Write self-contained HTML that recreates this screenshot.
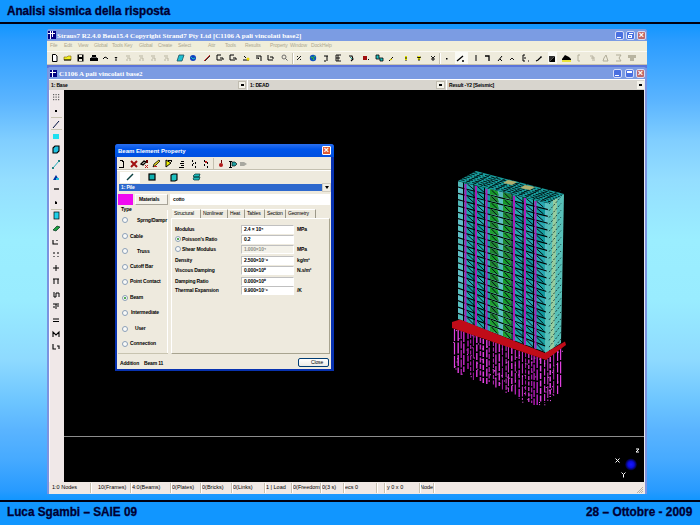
<!DOCTYPE html><html><head><meta charset="utf-8"><style>
*{margin:0;padding:0;box-sizing:border-box}
html,body{width:700px;height:525px;overflow:hidden}
body{position:relative;font-family:"Liberation Sans",sans-serif;
background:linear-gradient(to bottom,#1196ff 0px,#1196ff 24px,#2a9cff 40px,#32a0ff 50px,#5ab4ff 100px,#80ceff 140px,#94deff 180px,#9beeff 240px,#99ecff 300px,#8edaff 360px,#6ec6ff 400px,#5ab4ff 430px,#46aaff 460px,#289bff 490px,#1196ff 500px,#1196ff 525px);}
.a{position:absolute}
.ttl{left:7px;top:3px;font-size:13px;font-weight:bold;color:#000033;-webkit-text-stroke:0.35px #000033;transform-origin:0 0;white-space:nowrap}
.hline{left:0;width:700px;height:2px;background:#000010}
.foot{font-size:12.5px;font-weight:bold;color:#000033;-webkit-text-stroke:0.3px #000033;top:505px;white-space:nowrap;transform-origin:0 0}
.ttxt{color:#fff;font-weight:bold;font-size:7px;white-space:nowrap;line-height:8px;font-family:"Liberation Serif",serif}
.sm{font-size:5px;color:#000;white-space:nowrap;line-height:7px;font-weight:bold;letter-spacing:-0.15px}
.btn{width:9px;height:9px;border:1px solid #d4dcf8;border-radius:2px}
svg{position:absolute;left:0;top:0}
</style></head><body>
<div class="a ttl" style="transform:scaleX(0.9)">Analisi sismica della risposta</div>
<div class="a hline" style="top:22px"></div>
<div class="a hline" style="top:500px"></div>
<div class="a foot" style="left:7px;transform:scaleX(0.94)">Luca Sgambi – SAIE 09</div>
<div class="a foot" style="left:586px;transform:scaleX(0.95)">28 – Ottobre - 2009</div>
<div class="a" style="left:47px;top:29px;width:600px;height:465px;background:#7b93e0;border-radius:3px 3px 0 0"></div>
<div class="a" style="left:47px;top:29px;width:600px;height:12px;background:#7b9ce3;border-radius:3px 3px 0 0"></div>
<svg style="left:48px;top:31px" width="8" height="8" viewBox="0 0 8 8" shape-rendering="crispEdges"><rect width="8" height="8" fill="#000080"/><rect x="2" y="0" width="1" height="8" fill="#fff"/><rect x="4" y="0" width="1" height="6" fill="#fff"/><rect x="0" y="2" width="7" height="1" fill="#fff"/></svg>
<div class="a ttxt" style="left:57px;top:32px">Straus7 R2.4.0 Beta15.4 Copyright Strand7 Pty Ltd [C1106 A pali vincolati base2]</div>
<div class="a btn" style="left:615px;top:31px;background:#4a70e0"></div>
<div class="a btn" style="left:626px;top:31px;background:#4a70e0"></div>
<div class="a btn" style="left:637px;top:31px;background:#c06868"></div>
<div class="a" style="left:617px;top:37px;width:4px;height:1px;background:#fff"></div>
<div class="a" style="left:629px;top:33px;width:4px;height:1px;background:#fff"></div><div class="a" style="left:628px;top:35px;width:4px;height:3px;border:1px solid #fff;border-top-width:1px"></div>
<div class="a" style="left:637px;top:30px;width:9px;height:9px;color:#fff;font-size:9px;line-height:10px;text-align:center;font-weight:bold">×</div>
<div class="a" style="left:47px;top:41px;width:600px;height:10px;background:#f0eeda"></div>
<div class="a sm" style="left:50px;top:42px;color:#aca890;font-weight:normal">File</div>
<div class="a sm" style="left:64px;top:42px;color:#aca890;font-weight:normal">Edit</div>
<div class="a sm" style="left:78px;top:42px;color:#aca890;font-weight:normal">View</div>
<div class="a sm" style="left:94px;top:42px;color:#aca890;font-weight:normal">Global</div>
<div class="a sm" style="left:112px;top:42px;color:#aca890;font-weight:normal">Tools Key</div>
<div class="a sm" style="left:139px;top:42px;color:#aca890;font-weight:normal">Global</div>
<div class="a sm" style="left:158px;top:42px;color:#aca890;font-weight:normal">Create</div>
<div class="a sm" style="left:178px;top:42px;color:#aca890;font-weight:normal">Select</div>
<div class="a sm" style="left:208px;top:42px;color:#aca890;font-weight:normal">Attr</div>
<div class="a sm" style="left:225px;top:42px;color:#aca890;font-weight:normal">Tools</div>
<div class="a sm" style="left:245px;top:42px;color:#aca890;font-weight:normal">Results</div>
<div class="a sm" style="left:270px;top:42px;color:#aca890;font-weight:normal">Property</div>
<div class="a sm" style="left:290px;top:42px;color:#aca890;font-weight:normal">Window</div>
<div class="a sm" style="left:311px;top:42px;color:#aca890;font-weight:normal">Dock</div>
<div class="a sm" style="left:322px;top:42px;color:#aca890;font-weight:normal">Help</div>
<div class="a" style="left:47px;top:51px;width:600px;height:1px;background:#fbfaf4"></div>
<div class="a" style="left:47px;top:52px;width:600px;height:12px;background:#eeebdc"></div>
<div class="a" style="left:47px;top:64px;width:600px;height:1px;background:#c8c4b0"></div>
<div class="a" style="left:47px;top:65px;width:600px;height:3px;background:#5b74d8"></div>
<div class="a" style="left:48px;top:67px;width:598px;height:12px;background:#7b9be2;border-radius:2px 2px 0 0"></div>
<svg style="left:50px;top:70px" width="7" height="7" viewBox="0 0 8 8" shape-rendering="crispEdges"><rect width="8" height="8" fill="#000080"/><rect x="2" y="0" width="1" height="8" fill="#fff"/><rect x="4" y="0" width="1" height="6" fill="#fff"/><rect x="0" y="2" width="7" height="1" fill="#fff"/></svg>
<div class="a ttxt" style="left:59px;top:70px">C1106 A pali vincolati base2</div>
<div class="a btn" style="left:613px;top:69px;background:#4a70e0"></div>
<div class="a btn" style="left:625px;top:69px;background:#4a70e0"></div>
<div class="a btn" style="left:636px;top:69px;background:#c06868"></div>
<div class="a" style="left:615px;top:75px;width:4px;height:1px;background:#fff"></div>
<div class="a" style="left:627px;top:71px;width:5px;height:2px;background:#fff"></div>
<div class="a" style="left:636px;top:68px;width:9px;height:9px;color:#fff;font-size:9px;line-height:10px;text-align:center;font-weight:bold">×</div>
<div class="a" style="left:49px;top:79px;width:596px;height:1px;background:#fff"></div>
<div class="a" style="left:49px;top:80px;width:596px;height:10px;background:#d8d5ce"></div>
<div class="a sm" style="left:51px;top:82px;font-weight:bold">1: Base</div>
<div class="a" style="left:238px;top:81px;width:8px;height:8px;background:#f4f2ea;border:1px solid #c0bcb0"></div>
<div class="a" style="left:241px;top:84px;width:3px;height:2px;background:#000"></div>
<div class="a" style="left:247px;top:80px;width:1px;height:10px;background:#fff"></div>
<div class="a sm" style="left:250px;top:82px;font-weight:bold">1: DEAD</div>
<div class="a" style="left:436px;top:81px;width:9px;height:8px;background:#f4f2ea;border:1px solid #c0bcb0"></div>
<div class="a" style="left:439px;top:84px;width:3px;height:2px;background:#000"></div>
<div class="a" style="left:446px;top:80px;width:1px;height:10px;background:#fff"></div>
<div class="a sm" style="left:449px;top:82px;font-weight:bold">Result -Y2 [Seismic]</div>
<div class="a" style="left:637px;top:81px;width:7px;height:8px;background:#f4f2ea"></div>
<div class="a" style="left:639px;top:84px;width:3px;height:2px;background:#000"></div>
<div class="a" style="left:49px;top:90px;width:15px;height:392px;background:#f0e8e8"></div>
<div class="a" style="left:49px;top:90px;width:1px;height:392px;background:#fafaff"></div>
<div class="a" style="left:64px;top:90px;width:580px;height:392px;background:#000"></div>
<div class="a" style="left:64px;top:436px;width:580px;height:1px;background:#8c8c8c"></div>
<div class="a" style="left:644px;top:80px;width:1px;height:414px;background:#e8e8f0"></div>
<div class="a" style="left:49px;top:482px;width:596px;height:12px;background:#f0e8e4"></div>
<svg width="700" height="525" viewBox="0 0 700 525" style="left:0;top:0"><path d="M52.5 54.5h3l1.5 1.5v5.5h-4.5z" fill="#fff" stroke="#000" stroke-width="1"/><path d="M64 57h3l1-1h3v4h-7z" fill="#f0f020" stroke="#806000" stroke-width="0.6"/><path d="M64 60h7" stroke="#000" stroke-width="1"/><rect x="77.5" y="54.5" width="6" height="7" fill="#000"/><rect x="79" y="55" width="3" height="2" fill="#eeebdc"/><rect x="79" y="59" width="3" height="2" fill="#eeebdc"/><path d="M90 58h8v3h-8z" fill="#000"/><path d="M92 55h4v3h-4z" fill="#000"/><rect x="91" y="57" width="6" height="1" fill="#666"/><path d="M103 59l2-2 2 1 1 1" fill="none" stroke="#000" stroke-width="1"/><path d="M114.5 57h3l-1.5 2z" fill="#000"/><path d="M116 59v2" stroke="#000"/><path d="M126 56h4M127 58h3v3M126 60h2" stroke="#b8b4a0" stroke-width="1" fill="none"/><path d="M139 56h4M140 58h3v3M139 60h2" stroke="#b8b4a0" stroke-width="1" fill="none"/><path d="M151 56h4M152 58h3v3M151 60h2" stroke="#b8b4a0" stroke-width="1" fill="none"/><path d="M164 56h4M165 58h3v3M164 60h2" stroke="#b8b4a0" stroke-width="1" fill="none"/><path d="M177 61l2-6h5l-2 6z" fill="#20c0d0" stroke="#205060" stroke-width="0.8"/><circle cx="193" cy="58" r="3" fill="#1040c0"/><path d="M191 57l2 2 2-1" stroke="#20c0c0" stroke-width="1" fill="none"/><path d="M204 61l6-6" stroke="#c02020" stroke-width="1"/><path d="M205 61l5-5" stroke="#000" stroke-width="0.8"/><path d="M217 55h4M217 55v5h5M220 58h3v2" stroke="#000" stroke-width="1" fill="none"/><path d="M230 55h4M230 55v5h5M233 58h3v2" stroke="#000" stroke-width="1" fill="none"/><path d="M243 60h6M244 56l2 2" stroke="#000" stroke-width="1" fill="none"/><circle cx="248" cy="59" r="1.5" fill="#e8d800"/><path d="M256 56h5v5M256 58h3l-1 1" stroke="#000" stroke-width="1" fill="none"/><path d="M268 55v5h5M270 57h3v2" stroke="#000" stroke-width="1" fill="none"/><circle cx="284" cy="57" r="2" fill="none" stroke="#606060" stroke-width="0.9"/><path d="M285.5 58.5l2 2" stroke="#606060"/><path d="M292.5 53v11" stroke="#c4c0b0"/><path d="M293.5 53v11" stroke="#fff"/><path d="M297 56l1 1M300 59l1 1M297 60l4-4" stroke="#000" stroke-width="0.9"/><circle cx="313" cy="58" r="3.2" fill="#1050c0"/><path d="M311 57l2 1 1 2M314 56l1 1" stroke="#30c040" stroke-width="1.2"/><path d="M324 56h4M327 56v5M324 61h2" stroke="#000" stroke-width="1"/><path d="M336 55h5M336 55v6h5M336 58h4M338 55v6" stroke="#000" stroke-width="0.9" fill="none"/><path d="M349 56l3 0 1 3-2 2" stroke="#000" stroke-width="1.1" fill="none"/><path d="M350 57l2 2" stroke="#20a0a0"/><rect x="363" y="56" width="4" height="4" fill="#a01010"/><rect x="368" y="59" width="1" height="1" fill="#000"/><path d="M376 55h3v3h4v3h-3v-2h-4z" fill="#20c0c0" stroke="#000" stroke-width="0.8"/><path d="M389 61l4-4" stroke="#000" stroke-width="1"/><path d="M390 60l2-1" stroke="#e0d000" stroke-width="1.3"/><path d="M406 56v4" stroke="#e0e000" stroke-width="2"/><path d="M405 58h2M406 60v1" stroke="#000" stroke-width="0.9"/><path d="M419 56v4" stroke="#f0f000" stroke-width="2.5"/><path d="M417 57l2 1 2-1M419 59v2" stroke="#000" stroke-width="0.9"/><path d="M431 56l2 2 2-2M433 58v3M431 59h4" stroke="#000" stroke-width="0.9" fill="none"/><path d="M439.5 53v11" stroke="#c4c0b0"/><path d="M440.5 53v11" stroke="#fff"/><rect x="446" y="58" width="1.5" height="1.5" fill="#000"/><rect x="455" y="52" width="13" height="12" fill="#fafaf4"/><path d="M457 61l6-5M462 61h2" stroke="#000" stroke-width="1.3"/><path d="M476 55v6" stroke="#000" stroke-width="1"/><path d="M485 56h4v5" stroke="#000" stroke-width="1.3" fill="none"/><path d="M498 61l4-5M500 59l2 2" stroke="#000" stroke-width="1"/><path d="M510 60l2-2 2 2" stroke="#000" stroke-width="0.9" fill="none"/><path d="M525 55h-2v6h2M524 58h2M528 61h1" stroke="#000" stroke-width="1" fill="none"/><path d="M536 61l2-1 2-2 1-1M540 57h2" stroke="#000" stroke-width="1.1" fill="none"/><rect x="548" y="52" width="9" height="12" fill="#fafaf4"/><path d="M549 62h6v-6z" fill="#000"/><path d="M549 62v-6h6z" fill="#303030"/><path d="M562 59l3-4 4 2 2 2v1h-9z" fill="#000"/><path d="M562 61h9" stroke="#e8e000" stroke-width="1.5"/><path d="M578 55h2M578 55v6h2" stroke="#b0ac98" stroke-width="1" fill="none"/><path d="M590 56h3v5M591 58h4M594 60h1" stroke="#b0ac98" stroke-width="0.9" fill="none"/><path d="M603 61h5l-1-3-1-3-2 3z" fill="none" stroke="#b0ac98" stroke-width="1"/><path d="M616 55h5l-2 3 2 3h-5" stroke="#b0ac98" stroke-width="1" fill="none"/><path d="M628 55h8v3h-2v3h-4v-3h-2z" fill="#b8b4a0"/></svg>
<svg width="700" height="525" viewBox="0 0 700 525" style="left:0;top:0"><rect x="53" y="94" width="1.2" height="1.2" fill="#606060"/><rect x="55.5" y="94" width="1.2" height="1.2" fill="#606060"/><rect x="58" y="94" width="1.2" height="1.2" fill="#606060"/><rect x="53" y="96.5" width="1.2" height="1.2" fill="#606060"/><rect x="55.5" y="96.5" width="1.2" height="1.2" fill="#606060"/><rect x="58" y="96.5" width="1.2" height="1.2" fill="#606060"/><rect x="53" y="99" width="1.2" height="1.2" fill="#606060"/><rect x="55.5" y="99" width="1.2" height="1.2" fill="#606060"/><rect x="58" y="99" width="1.2" height="1.2" fill="#606060"/><rect x="55" y="110" width="2" height="2" fill="#000"/><path d="M51 117.5h11" stroke="#c8c4b0"/><path d="M51 129.5h11" stroke="#c8c4b0"/><path d="M51 209.5h11" stroke="#c8c4b0"/><path d="M53 128l6-7" stroke="#001040" stroke-width="1"/><rect x="53" y="134" width="6" height="5" fill="#20e0f0"/><path d="M53 148l2-2h4v5l-2 2h-4z" fill="#20c0e0" stroke="#000" stroke-width="1.1"/><path d="M53 168l6-7" stroke="#20b0c0" stroke-width="1"/><rect x="52" y="167" width="2" height="2" fill="#208080"/><rect x="58" y="160" width="2" height="2" fill="#208080"/><path d="M53 180l3-5 3 5z" fill="#0030a0"/><rect x="56" y="178" width="3" height="2" fill="#20c0e0"/><path d="M54 189h5" stroke="#000" stroke-width="1.3"/><path d="M55 201l2 1v2h-2z" fill="#000"/><rect x="54" y="212" width="5" height="7" fill="#20d0e8" stroke="#000" stroke-width="0.7"/><path d="M53 230l4-4 3 1-4 4z" fill="#20a040" stroke="#003020" stroke-width="0.7"/><path d="M53 240v4h5M57 240v1" stroke="#000" stroke-width="1.1" fill="none"/><path d="M54 252v2M54 256v1M58 252v2M58 256v1" stroke="#000" stroke-width="1"/><path d="M53 268h6M56 265v6" stroke="#000" stroke-width="1"/><path d="M53 279h6M54 279v5M58 279v5" stroke="#000" stroke-width="1" fill="none"/><path d="M54 292v5h2v-4h3v4" stroke="#000" stroke-width="1" fill="none"/><path d="M53 304h6M56 304v5M53 307h2M57 306h2" stroke="#000" stroke-width="1" fill="none"/><path d="M53 319h6M53 321.5h6" stroke="#000" stroke-width="1"/><path d="M53 337v-5l3 3 3-3v5" stroke="#000" stroke-width="1.1" fill="none"/><path d="M53 344v5h3M57 346h2v3" stroke="#000" stroke-width="1.1" fill="none"/></svg>
<div class="a sm" style="left:52px;top:484px;font-size:5.5px;letter-spacing:0;font-weight:normal">1:0 Nodes</div>
<div class="a sm" style="left:98px;top:484px;font-size:5.5px;letter-spacing:0;font-weight:normal">10(Frames)</div>
<div class="a sm" style="left:132px;top:484px;font-size:5.5px;letter-spacing:0;font-weight:normal">4:0(Beams)</div>
<div class="a sm" style="left:172px;top:484px;font-size:5.5px;letter-spacing:0;font-weight:normal">0(Plates)</div>
<div class="a sm" style="left:202px;top:484px;font-size:5.5px;letter-spacing:0;font-weight:normal">0(Bricks)</div>
<div class="a sm" style="left:233px;top:484px;font-size:5.5px;letter-spacing:0;font-weight:normal">0(Links)</div>
<div class="a sm" style="left:266px;top:484px;font-size:5.5px;letter-spacing:0;font-weight:normal">1 | Load</div>
<div class="a sm" style="left:293px;top:484px;font-size:5.5px;letter-spacing:0;font-weight:normal">0(Freedom)</div>
<div class="a sm" style="left:322px;top:484px;font-size:5.5px;letter-spacing:0;font-weight:normal">0(3 s)</div>
<div class="a sm" style="left:345px;top:484px;font-size:5.5px;letter-spacing:0;font-weight:normal">ecs 0</div>
<div class="a sm" style="left:378px;top:484px;font-size:5.5px;letter-spacing:0;font-weight:normal"></div>
<div class="a sm" style="left:387px;top:484px;font-size:5.5px;letter-spacing:0;font-weight:normal">y 0 x 0</div>
<div class="a sm" style="left:420px;top:484px;font-size:5.5px;letter-spacing:0;font-weight:normal">Node</div>
<div class="a" style="left:90px;top:483px;width:1px;height:10px;background:#c8c0b0"></div><div class="a" style="left:91px;top:483px;width:1px;height:10px;background:#fff"></div>
<div class="a" style="left:130px;top:483px;width:1px;height:10px;background:#c8c0b0"></div><div class="a" style="left:131px;top:483px;width:1px;height:10px;background:#fff"></div>
<div class="a" style="left:170px;top:483px;width:1px;height:10px;background:#c8c0b0"></div><div class="a" style="left:171px;top:483px;width:1px;height:10px;background:#fff"></div>
<div class="a" style="left:200px;top:483px;width:1px;height:10px;background:#c8c0b0"></div><div class="a" style="left:201px;top:483px;width:1px;height:10px;background:#fff"></div>
<div class="a" style="left:231px;top:483px;width:1px;height:10px;background:#c8c0b0"></div><div class="a" style="left:232px;top:483px;width:1px;height:10px;background:#fff"></div>
<div class="a" style="left:264px;top:483px;width:1px;height:10px;background:#c8c0b0"></div><div class="a" style="left:265px;top:483px;width:1px;height:10px;background:#fff"></div>
<div class="a" style="left:291px;top:483px;width:1px;height:10px;background:#c8c0b0"></div><div class="a" style="left:292px;top:483px;width:1px;height:10px;background:#fff"></div>
<div class="a" style="left:320px;top:483px;width:1px;height:10px;background:#c8c0b0"></div><div class="a" style="left:321px;top:483px;width:1px;height:10px;background:#fff"></div>
<div class="a" style="left:343px;top:483px;width:1px;height:10px;background:#c8c0b0"></div><div class="a" style="left:344px;top:483px;width:1px;height:10px;background:#fff"></div>
<div class="a" style="left:376px;top:483px;width:1px;height:10px;background:#c8c0b0"></div><div class="a" style="left:377px;top:483px;width:1px;height:10px;background:#fff"></div>
<div class="a" style="left:384px;top:483px;width:1px;height:10px;background:#c8c0b0"></div><div class="a" style="left:385px;top:483px;width:1px;height:10px;background:#fff"></div>
<div class="a" style="left:419px;top:483px;width:1px;height:10px;background:#c8c0b0"></div><div class="a" style="left:420px;top:483px;width:1px;height:10px;background:#fff"></div>
<div class="a" style="left:433px;top:483px;width:1px;height:10px;background:#c8c0b0"></div><div class="a" style="left:434px;top:483px;width:1px;height:10px;background:#fff"></div>
<svg width="700" height="525" viewBox="0 0 700 525" style="left:0;top:0"><path d="M643 487l-6 6M643 489l-4 4M643 491l-2 2" stroke="#a8a090" stroke-width="0.8"/></svg>
<svg width="700" height="525" viewBox="0 0 700 525" style="left:0;top:0"><defs><radialGradient id="bd"><stop offset="0" stop-color="#1818ff"/><stop offset="0.5" stop-color="#0c0ce0"/><stop offset="1" stop-color="#000020"/></radialGradient></defs><circle cx="631" cy="464.5" r="6" fill="url(#bd)"/><path d="M615.5 458.5l4 4M619.5 458.5l-4 4" stroke="#fff" stroke-width="1"/><path d="M621.5 472.5l2 2 2-2M623.5 474.5v3" stroke="#fff" stroke-width="1" fill="none"/><path d="M636 449h3l-3 3h3" stroke="#fff" stroke-width="1" fill="none"/></svg>
<div class="a" style="left:115px;top:144px;width:219px;height:227px;background:#0832b0;border-radius:3px 3px 0 0"></div>
<div class="a" style="left:115px;top:144px;width:219px;height:13px;background:linear-gradient(to bottom,#2a70f0,#0055ea 40%,#0050e0);border-radius:3px 3px 0 0"></div>
<div class="a ttxt" style="left:118px;top:146.5px;font-size:6px;font-family:Liberation Sans,sans-serif">Beam Element Property</div>
<div class="a" style="left:322px;top:146px;width:9px;height:9px;background:#e05a30;border:1px solid #fff;border-radius:1px"></div>
<div class="a" style="left:322px;top:145px;width:9px;height:10px;color:#fff;font-size:9px;line-height:10px;text-align:center;font-weight:bold">×</div>
<div class="a" style="left:117px;top:157px;width:214px;height:212px;background:#eeeade"></div>
<div class="a" style="left:117px;top:169px;width:214px;height:1px;background:#c4c0b0"></div>
<div class="a" style="left:117px;top:170px;width:214px;height:1px;background:#fff"></div>
<div class="a" style="left:213px;top:158px;width:1px;height:10px;background:#c4c0b0"></div>

<svg style="left:115px;top:157px" width="140" height="13" viewBox="0 0 140 13" shape-rendering="crispEdges">
<path d="M5 3h2v1h1v1" fill="none" stroke="#000" stroke-width="1"/><path d="M8 5v5H4" fill="none" stroke="#000" stroke-width="1"/>
<path d="M16 4l6 6M22 4l-6 6" stroke="#a01010" stroke-width="2" shape-rendering="auto"/>
<path d="M26 7l3-3 2 1-3 3z" fill="none" stroke="#000" stroke-width="1.3" shape-rendering="auto"/><rect x="31" y="3" width="2" height="3" fill="#600"/><path d="M30 8l3 3M33 8l-3 3" stroke="#c02020" stroke-width="1" shape-rendering="auto"/>
<path d="M38 10l1-3 5-4 1 1-4 4z" fill="#f0e020" stroke="#000" stroke-width="0.8" shape-rendering="auto"/><path d="M39 10l3-1" stroke="#c02020"/>
<path d="M51 3l5 3-5 4z" fill="#f0f000" stroke="#000" stroke-width="1" shape-rendering="auto"/><path d="M53 3h3v2" stroke="#000" fill="none"/>
<path d="M66 4h3M65 6h4M66 8h3M64 10h5" stroke="#000" stroke-width="1"/>
<path d="M77 3v2M77 7v2M80 5v2M80 9v2M78 6h1" stroke="#000" stroke-width="1"/>
<path d="M89 3v2M89 7v2M92 5v2M92 9v2" stroke="#000" stroke-width="1"/><rect x="90" y="4" width="2" height="2" fill="#c02020"/>
<path d="M98.5 2v10" stroke="#c4c0b0"/>
<path d="M106 3v3" stroke="#600" stroke-width="1"/><circle cx="106" cy="8" r="2" fill="#b01818" shape-rendering="auto"/>
<path d="M114 4h3M115 4v6M114 10h3" stroke="#000" stroke-width="1"/><path d="M117 5h3l2 2-2 2h-3z" fill="#20a0a0" stroke="#000" stroke-width="0.6" shape-rendering="auto"/>
<path d="M125 5h4l3 2-3 2h-4z" fill="#a8a8a0" shape-rendering="auto"/>
</svg>
<div class="a" style="left:120px;top:172px;width:20px;height:11px;background:#fff"></div>
<svg style="left:119px;top:171px" width="90" height="12" viewBox="0 0 90 12"><path d="M8 9l6-6" stroke="#0a4040" stroke-width="1.5"/><rect x="30" y="3" width="6" height="6" fill="#10b0b0" stroke="#000" stroke-width="1.2"/><path d="M52 4l2-1h4v6l-2 1h-4z" fill="#20c0c0" stroke="#000" stroke-width="1.1"/><path d="M74 5l2-2h5l-1 3h-5zM74 8l1-2h6l-1 3h-5z" fill="#20b8b8" stroke="#003030" stroke-width="0.7"/></svg>
<div class="a" style="left:119px;top:184px;width:203px;height:7px;background:#2d68cd"></div>
<div class="a sm" style="left:121px;top:184px;color:#fff;line-height:7px">1: Pile</div>
<div class="a" style="left:322px;top:183px;width:9px;height:9px;background:#f0eee6;border:1px solid #d0ccc0"></div>
<div class="a" style="left:325px;top:186px;width:0;height:0;border-left:2px solid transparent;border-right:2px solid transparent;border-top:3px solid #000"></div>
<div class="a" style="left:118px;top:194px;width:15px;height:11px;background:#f00af0"></div>
<div class="a" style="left:135px;top:194px;width:33px;height:11px;background:#f4f2ea;border:1px solid #a8a498;border-top-color:#fff;border-left-color:#fff"></div>
<div class="a sm" style="left:139px;top:196px">Materials</div>
<div class="a" style="left:170px;top:194px;width:160px;height:11px;background:#fff"></div>
<div class="a sm" style="left:173px;top:196px">cotto</div>
<div class="a" style="left:167px;top:210px;width:1px;height:144px;background:#fff"></div>
<div class="a" style="left:118px;top:353px;width:50px;height:1px;background:#c8c4b0"></div>
<div class="a sm" style="left:120px;top:206px;background:#eeeade;padding:0 1px">Type</div>
<div class="a" style="left:122px;top:217.4px;width:6px;height:6px;border-radius:50%;background:#fafaf8;border:1px solid #8ca0b8"></div>
<div class="a sm" style="left:137px;top:216.9px">Sprng/Dampr</div>
<div class="a" style="left:122px;top:233.0px;width:6px;height:6px;border-radius:50%;background:#fafaf8;border:1px solid #8ca0b8"></div>
<div class="a sm" style="left:130px;top:232.5px">Cable</div>
<div class="a" style="left:122px;top:248.2px;width:6px;height:6px;border-radius:50%;background:#fafaf8;border:1px solid #8ca0b8"></div>
<div class="a sm" style="left:137px;top:247.7px">Truss</div>
<div class="a" style="left:122px;top:263.5px;width:6px;height:6px;border-radius:50%;background:#fafaf8;border:1px solid #8ca0b8"></div>
<div class="a sm" style="left:130px;top:263.0px">Cutoff Bar</div>
<div class="a" style="left:122px;top:278.7px;width:6px;height:6px;border-radius:50%;background:#fafaf8;border:1px solid #8ca0b8"></div>
<div class="a sm" style="left:130px;top:278.2px">Point Contact</div>
<div class="a" style="left:122px;top:294.6px;width:6px;height:6px;border-radius:50%;background:#fafaf8;border:1px solid #8ca0b8"></div>
<div class="a" style="left:124px;top:296.6px;width:2px;height:2px;border-radius:50%;background:#209020"></div>
<div class="a sm" style="left:130px;top:294.1px">Beam</div>
<div class="a" style="left:122px;top:309.8px;width:6px;height:6px;border-radius:50%;background:#fafaf8;border:1px solid #8ca0b8"></div>
<div class="a sm" style="left:131px;top:309.3px">Intermediate</div>
<div class="a" style="left:122px;top:325.7px;width:6px;height:6px;border-radius:50%;background:#fafaf8;border:1px solid #8ca0b8"></div>
<div class="a sm" style="left:135px;top:325.2px">User</div>
<div class="a" style="left:122px;top:340.9px;width:6px;height:6px;border-radius:50%;background:#fafaf8;border:1px solid #8ca0b8"></div>
<div class="a sm" style="left:130px;top:340.4px">Connection</div>
<div class="a" style="left:171px;top:218px;width:159px;height:136px;border:1px solid #fff;border-right-color:#a8a490;border-bottom-color:#a8a490"></div>
<div class="a" style="left:172px;top:209px;width:29px;height:9px;background:#f2f0e6;border-right:1px solid #9c9888;border-top:1px solid #fff"></div>
<div class="a sm" style="left:174px;top:210px;font-weight:normal">Structural</div>
<div class="a" style="left:201px;top:209px;width:27px;height:9px;background:#eeeade;border-right:1px solid #9c9888;border-top:1px solid #fff"></div>
<div class="a sm" style="left:203px;top:210px;font-weight:normal">Nonlinear</div>
<div class="a" style="left:228px;top:209px;width:17px;height:9px;background:#eeeade;border-right:1px solid #9c9888;border-top:1px solid #fff"></div>
<div class="a sm" style="left:230px;top:210px;font-weight:normal">Heat</div>
<div class="a" style="left:245px;top:209px;width:20px;height:9px;background:#eeeade;border-right:1px solid #9c9888;border-top:1px solid #fff"></div>
<div class="a sm" style="left:247px;top:210px;font-weight:normal">Tables</div>
<div class="a" style="left:265px;top:209px;width:21px;height:9px;background:#eeeade;border-right:1px solid #9c9888;border-top:1px solid #fff"></div>
<div class="a sm" style="left:267px;top:210px;font-weight:normal">Section</div>
<div class="a" style="left:286px;top:209px;width:30px;height:9px;background:#eeeade;border-right:1px solid #9c9888;border-top:1px solid #fff"></div>
<div class="a sm" style="left:288px;top:210px;font-weight:normal">Geometry</div>
<div class="a" style="left:241px;top:224.6px;width:53px;height:9px;background:#fff;border:1px solid #c0c0c0;border-right-color:#fff;border-bottom-color:#fff"></div>
<div class="a sm" style="left:244px;top:225.6px;color:#000">2.4 × 10⁴</div>
<div class="a sm" style="left:175px;top:225.6px">Modulus</div>
<div class="a sm" style="left:297px;top:225.6px">MPa</div>
<div class="a" style="left:241px;top:235.0px;width:53px;height:9px;background:#fff;border:1px solid #c0c0c0;border-right-color:#fff;border-bottom-color:#fff"></div>
<div class="a sm" style="left:244px;top:236.0px;color:#000">0.2</div>
<div class="a sm" style="left:182px;top:236.0px">Poisson's Ratio</div>
<div class="a" style="left:241px;top:245.1px;width:53px;height:9px;background:#f4f2ea;border:1px solid #c0c0c0;border-right-color:#fff;border-bottom-color:#fff"></div>
<div class="a sm" style="left:244px;top:246.1px;color:#909088">1.000×10⁴</div>
<div class="a sm" style="left:182px;top:246.1px">Shear Modulus</div>
<div class="a sm" style="left:297px;top:246.1px">MPa</div>
<div class="a" style="left:241px;top:255.7px;width:53px;height:9px;background:#fff;border:1px solid #c0c0c0;border-right-color:#fff;border-bottom-color:#fff"></div>
<div class="a sm" style="left:244px;top:256.7px;color:#000">2.500×10⁻⁹</div>
<div class="a sm" style="left:175px;top:256.7px">Density</div>
<div class="a sm" style="left:297px;top:256.7px">kg/m³</div>
<div class="a" style="left:241px;top:266.3px;width:53px;height:9px;background:#fff;border:1px solid #c0c0c0;border-right-color:#fff;border-bottom-color:#fff"></div>
<div class="a sm" style="left:244px;top:267.3px;color:#000">0.000×10⁰</div>
<div class="a sm" style="left:175px;top:267.3px">Viscous Damping</div>
<div class="a sm" style="left:297px;top:267.3px">N.s/m²</div>
<div class="a" style="left:241px;top:276.5px;width:53px;height:9px;background:#fff;border:1px solid #c0c0c0;border-right-color:#fff;border-bottom-color:#fff"></div>
<div class="a sm" style="left:244px;top:277.5px;color:#000">0.000×10⁰</div>
<div class="a sm" style="left:175px;top:277.5px">Damping Ratio</div>
<div class="a" style="left:241px;top:286.4px;width:53px;height:9px;background:#fff;border:1px solid #c0c0c0;border-right-color:#fff;border-bottom-color:#fff"></div>
<div class="a sm" style="left:244px;top:287.4px;color:#000">9.900×10⁻⁶</div>
<div class="a sm" style="left:175px;top:287.4px">Thermal Expansion</div>
<div class="a sm" style="left:297px;top:287.4px">/K</div>
<div class="a" style="left:175px;top:236.0px;width:6px;height:6px;border-radius:50%;background:#fafaf8;border:1px solid #8ca0b8"></div>
<div class="a" style="left:177px;top:238.0px;width:2px;height:2px;border-radius:50%;background:#209020"></div>
<div class="a" style="left:175px;top:246.4px;width:6px;height:6px;border-radius:50%;background:#fafaf8;border:1px solid #8ca0b8"></div>
<div class="a sm" style="left:120px;top:360px">Addition</div>
<div class="a sm" style="left:144px;top:360px">Beam 11</div>
<div class="a" style="left:298px;top:358px;width:31px;height:9px;background:linear-gradient(#fff,#ecebe6);border:1px solid #003c74;border-radius:2px"></div>
<div class="a sm" style="left:311px;top:359px;font-weight:normal">Close</div>
<svg width="700" height="525" viewBox="0 0 700 525" style="left:0;top:0">
<line x1="454.5" y1="329" x2="454.5" y2="368" stroke="#e040e0" stroke-width="1.2" stroke-dasharray="12 1.5"/>
<line x1="458.2" y1="330" x2="458.2" y2="373" stroke="#d038d0" stroke-width="1.5" stroke-dasharray="11 1.5"/>
<line x1="461.2" y1="331" x2="461.2" y2="375" stroke="#c028c0" stroke-width="1.2" stroke-dasharray="8 1.5"/>
<line x1="463.8" y1="332" x2="463.8" y2="372" stroke="#c028c0" stroke-width="1.5" stroke-dasharray="10 1.5"/>
<line x1="468.0" y1="333" x2="468.0" y2="369" stroke="#a818a8" stroke-width="1.5" stroke-dasharray="6 1.5"/>
<line x1="470.7" y1="334" x2="470.7" y2="375" stroke="#c028c0" stroke-width="1.0" stroke-dasharray="4 1.5"/>
<line x1="473.4" y1="335" x2="473.4" y2="380" stroke="#a818a8" stroke-width="1.0" stroke-dasharray="11 1.5"/>
<line x1="476.8" y1="336" x2="476.8" y2="377" stroke="#d038d0" stroke-width="1.5" stroke-dasharray="7 1.5"/>
<line x1="480.4" y1="338" x2="480.4" y2="381" stroke="#c028c0" stroke-width="1.5" stroke-dasharray="5 1.5"/>
<line x1="483.3" y1="339" x2="483.3" y2="383" stroke="#e040e0" stroke-width="1.5" stroke-dasharray="5 1.5"/>
<line x1="486.8" y1="340" x2="486.8" y2="384" stroke="#d038d0" stroke-width="1.5" stroke-dasharray="8 1.5"/>
<line x1="489.2" y1="341" x2="489.2" y2="382" stroke="#c028c0" stroke-width="1.2" stroke-dasharray="5 1.5"/>
<line x1="493.4" y1="342" x2="493.4" y2="386" stroke="#c028c0" stroke-width="1.0" stroke-dasharray="4 1.5"/>
<line x1="495.9" y1="343" x2="495.9" y2="389" stroke="#e040e0" stroke-width="1.2" stroke-dasharray="10 1.5"/>
<line x1="499.3" y1="344" x2="499.3" y2="386" stroke="#d038d0" stroke-width="1.5" stroke-dasharray="8 1.5"/>
<line x1="502.4" y1="345" x2="502.4" y2="391" stroke="#b020b8" stroke-width="1.0" stroke-dasharray="10 1.5"/>
<line x1="506.1" y1="346" x2="506.1" y2="393" stroke="#d038d0" stroke-width="1.0" stroke-dasharray="5 1.5"/>
<line x1="508.4" y1="347" x2="508.4" y2="392" stroke="#e040e0" stroke-width="1.0" stroke-dasharray="12 1.5"/>
<line x1="511.8" y1="348" x2="511.8" y2="392" stroke="#d038d0" stroke-width="1.5" stroke-dasharray="6 1.5"/>
<line x1="515.3" y1="350" x2="515.3" y2="395" stroke="#c028c0" stroke-width="1.2" stroke-dasharray="10 1.5"/>
<line x1="519.2" y1="351" x2="519.2" y2="399" stroke="#b020b8" stroke-width="1.5" stroke-dasharray="8 1.5"/>
<line x1="522.4" y1="352" x2="522.4" y2="400" stroke="#d038d0" stroke-width="1.0" stroke-dasharray="10 1.5"/>
<line x1="525.6" y1="353" x2="525.6" y2="397" stroke="#a818a8" stroke-width="1.0" stroke-dasharray="4 1.5"/>
<line x1="528.8" y1="354" x2="528.8" y2="403" stroke="#e040e0" stroke-width="1.2" stroke-dasharray="4 1.5"/>
<line x1="531.7" y1="355" x2="531.7" y2="403" stroke="#b020b8" stroke-width="1.2" stroke-dasharray="5 1.5"/>
<line x1="534.1" y1="356" x2="534.1" y2="405" stroke="#a818a8" stroke-width="1.5" stroke-dasharray="7 1.5"/>
<line x1="537.2" y1="357" x2="537.2" y2="405" stroke="#b020b8" stroke-width="1.5" stroke-dasharray="11 1.5"/>
<line x1="540.6" y1="358" x2="540.6" y2="402" stroke="#e040e0" stroke-width="1.5" stroke-dasharray="6 1.5"/>
<line x1="544.6" y1="360" x2="544.6" y2="403" stroke="#d038d0" stroke-width="1.2" stroke-dasharray="7 1.5"/>
<line x1="547.8" y1="359" x2="547.8" y2="401" stroke="#d038d0" stroke-width="1.0" stroke-dasharray="12 1.5"/>
<line x1="550.2" y1="357" x2="550.2" y2="397" stroke="#e040e0" stroke-width="1.5" stroke-dasharray="5 1.5"/>
<line x1="553.7" y1="354" x2="553.7" y2="396" stroke="#c028c0" stroke-width="1.0" stroke-dasharray="12 1.5"/>
<line x1="557.6" y1="351" x2="557.6" y2="394" stroke="#e040e0" stroke-width="1.2" stroke-dasharray="10 1.5"/>
<line x1="560.6" y1="348" x2="560.6" y2="387" stroke="#e040e0" stroke-width="1.2" stroke-dasharray="12 1.5"/>
<rect x="531.2" y="358.5" width="1" height="1" fill="#f060f0"/>
<rect x="477.1" y="362.7" width="1" height="1" fill="#f060f0"/>
<rect x="545.8" y="387.0" width="1" height="1" fill="#f060f0"/>
<rect x="482.8" y="381.7" width="1" height="1" fill="#f060f0"/>
<rect x="474.4" y="336.4" width="1" height="1" fill="#f060f0"/>
<rect x="481.6" y="359.0" width="1" height="1" fill="#f060f0"/>
<rect x="458.7" y="338.2" width="1" height="1" fill="#f060f0"/>
<rect x="492.6" y="369.2" width="1" height="1" fill="#f060f0"/>
<rect x="466.5" y="349.5" width="1" height="1" fill="#f060f0"/>
<rect x="550.0" y="400.1" width="1" height="1" fill="#f060f0"/>
<rect x="524.3" y="387.3" width="1" height="1" fill="#f060f0"/>
<rect x="516.3" y="356.9" width="1" height="1" fill="#f060f0"/>
<rect x="455.9" y="330.1" width="1" height="1" fill="#f060f0"/>
<rect x="552.1" y="386.2" width="1" height="1" fill="#f060f0"/>
<rect x="557.9" y="351.6" width="1" height="1" fill="#f060f0"/>
<rect x="522.0" y="376.0" width="1" height="1" fill="#f060f0"/>
<rect x="532.4" y="371.6" width="1" height="1" fill="#f060f0"/>
<rect x="561.9" y="350.8" width="1" height="1" fill="#f060f0"/>
<rect x="512.1" y="384.8" width="1" height="1" fill="#f060f0"/>
<rect x="551.0" y="388.6" width="1" height="1" fill="#f060f0"/>
<rect x="529.4" y="394.5" width="1" height="1" fill="#f060f0"/>
<rect x="552.7" y="370.3" width="1" height="1" fill="#f060f0"/>
<rect x="527.4" y="399.1" width="1" height="1" fill="#f060f0"/>
<rect x="547.8" y="376.9" width="1" height="1" fill="#f060f0"/>
<rect x="539.0" y="402.0" width="1" height="1" fill="#f060f0"/>
<rect x="515.0" y="380.4" width="1" height="1" fill="#f060f0"/>
<rect x="494.1" y="370.3" width="1" height="1" fill="#f060f0"/>
<rect x="519.0" y="354.8" width="1" height="1" fill="#f060f0"/>
<rect x="522.3" y="401.7" width="1" height="1" fill="#f060f0"/>
<rect x="548.8" y="389.9" width="1" height="1" fill="#f060f0"/>
<rect x="494.7" y="377.8" width="1" height="1" fill="#f060f0"/>
<rect x="515.9" y="371.6" width="1" height="1" fill="#f060f0"/>
<rect x="544.2" y="363.2" width="1" height="1" fill="#f060f0"/>
<rect x="534.5" y="357.6" width="1" height="1" fill="#f060f0"/>
<rect x="518.1" y="374.5" width="1" height="1" fill="#f060f0"/>
<rect x="477.3" y="369.2" width="1" height="1" fill="#f060f0"/>
<rect x="506.7" y="376.7" width="1" height="1" fill="#f060f0"/>
<rect x="553.3" y="365.6" width="1" height="1" fill="#f060f0"/>
<rect x="453.2" y="341.9" width="1" height="1" fill="#f060f0"/>
<rect x="526.6" y="363.6" width="1" height="1" fill="#f060f0"/>
<rect x="470.7" y="376.2" width="1" height="1" fill="#f060f0"/>
<rect x="524.6" y="374.9" width="1" height="1" fill="#f060f0"/>
<rect x="550.1" y="371.2" width="1" height="1" fill="#f060f0"/>
<rect x="525.2" y="362.9" width="1" height="1" fill="#f060f0"/>
<rect x="499.4" y="383.1" width="1" height="1" fill="#f060f0"/>
<rect x="552.6" y="393.8" width="1" height="1" fill="#f060f0"/>
<rect x="494.3" y="370.4" width="1" height="1" fill="#f060f0"/>
<rect x="486.8" y="346.3" width="1" height="1" fill="#f060f0"/>
<rect x="506.6" y="387.5" width="1" height="1" fill="#f060f0"/>
<rect x="545.4" y="391.5" width="1" height="1" fill="#f060f0"/>
<rect x="556.5" y="364.0" width="1" height="1" fill="#f060f0"/>
<rect x="470.6" y="355.1" width="1" height="1" fill="#f060f0"/>
<rect x="482.3" y="348.4" width="1" height="1" fill="#f060f0"/>
<rect x="497.5" y="373.7" width="1" height="1" fill="#f060f0"/>
<rect x="506.3" y="361.9" width="1" height="1" fill="#f060f0"/>
<rect x="544.3" y="404.3" width="1" height="1" fill="#f060f0"/>
<rect x="501.8" y="348.6" width="1" height="1" fill="#f060f0"/>
<rect x="455.5" y="368.5" width="1" height="1" fill="#f060f0"/>
<rect x="456.6" y="361.5" width="1" height="1" fill="#f060f0"/>
<rect x="514.8" y="364.7" width="1" height="1" fill="#f060f0"/>
<rect x="539.1" y="358.6" width="1" height="1" fill="#f060f0"/>
<rect x="466.9" y="354.0" width="1" height="1" fill="#f060f0"/>
<rect x="454.7" y="366.2" width="1" height="1" fill="#f060f0"/>
<rect x="478.1" y="343.5" width="1" height="1" fill="#f060f0"/>
<rect x="457.2" y="358.2" width="1" height="1" fill="#f060f0"/>
<rect x="501.1" y="375.3" width="1" height="1" fill="#f060f0"/>
<rect x="524.1" y="393.1" width="1" height="1" fill="#f060f0"/>
<rect x="557.4" y="381.5" width="1" height="1" fill="#f060f0"/>
<rect x="473.9" y="357.5" width="1" height="1" fill="#f060f0"/>
<rect x="471.7" y="335.2" width="1" height="1" fill="#f060f0"/>
<rect x="503.9" y="380.5" width="1" height="1" fill="#f060f0"/>
<rect x="471.7" y="347.3" width="1" height="1" fill="#f060f0"/>
<rect x="490.0" y="374.2" width="1" height="1" fill="#f060f0"/>
<rect x="509.2" y="377.7" width="1" height="1" fill="#f060f0"/>
<rect x="535.2" y="376.4" width="1" height="1" fill="#f060f0"/>
<rect x="539.1" y="404.1" width="1" height="1" fill="#f060f0"/>
<rect x="461.6" y="373.7" width="1" height="1" fill="#f060f0"/>
<rect x="531.5" y="361.7" width="1" height="1" fill="#f060f0"/>
<rect x="501.9" y="375.4" width="1" height="1" fill="#f060f0"/>
<rect x="552.1" y="371.9" width="1" height="1" fill="#f060f0"/>
<polygon points="458.0,181.3 463.0,182.5 463.0,187.7 458.0,186.4" fill="#50b8b8"/>
<polygon points="463.0,182.5 466.0,183.3 466.0,188.4 463.0,187.7" fill="#10989c"/>
<polygon points="466.0,183.3 476.0,185.7 476.0,190.9 466.0,188.4" fill="#28a8b0"/>
<line x1="467.5" y1="184.1" x2="474.5" y2="190.1" stroke="#001018" stroke-width="1"/>
<polygon points="476.0,185.7 486.0,188.1 486.0,193.4 476.0,190.9" fill="#10989c"/>
<line x1="477.5" y1="186.6" x2="484.5" y2="192.6" stroke="#001018" stroke-width="1"/>
<polygon points="486.0,188.1 490.0,189.1 490.0,194.4 486.0,193.4" fill="#20a8a8"/>
<polygon points="490.0,189.1 499.0,191.3 499.0,196.7 490.0,194.4" fill="#68c0c0"/>
<polygon points="490.0,189.1 497.5,191.0 499.0,195.8 490.0,194.4" fill="#189828"/>
<line x1="491.5" y1="190.1" x2="497.5" y2="195.8" stroke="#001018" stroke-width="1"/>
<polygon points="499.0,191.3 503.0,192.3 503.0,197.7 499.0,196.7" fill="#50b8b8"/>
<polygon points="503.0,192.3 512.0,194.5 512.0,199.9 503.0,197.7" fill="#68c0c0"/>
<polygon points="503.0,192.3 510.5,194.1 512.0,199.0 503.0,197.7" fill="#208830"/>
<line x1="504.5" y1="193.3" x2="510.5" y2="199.0" stroke="#001018" stroke-width="1"/>
<polygon points="512.0,194.5 514.0,195.0 514.0,200.5 512.0,199.9" fill="#18a0a0"/>
<polygon points="514.0,195.0 525.0,197.7 525.0,203.2 514.0,200.5" fill="#20a8a8"/>
<line x1="515.5" y1="196.0" x2="523.5" y2="202.2" stroke="#001018" stroke-width="1"/>
<polygon points="525.0,197.7 535.0,200.1 535.0,205.7 525.0,203.2" fill="#20a8a8"/>
<line x1="526.5" y1="198.7" x2="533.5" y2="204.7" stroke="#001018" stroke-width="1"/>
<polygon points="535.0,200.1 545.0,202.6 545.0,208.2 535.0,205.7" fill="#28a8b0"/>
<line x1="536.5" y1="201.2" x2="543.5" y2="207.2" stroke="#001018" stroke-width="1"/>
<polygon points="545.0,202.6 549.0,203.5 549.0,209.2 545.0,208.2" fill="#58c0c0"/>
<polygon points="458.0,187.6 463.0,188.9 463.0,194.0 458.0,192.7" fill="#60c0c8"/>
<polygon points="463.0,188.9 466.0,189.6 466.0,194.8 463.0,194.0" fill="#10989c"/>
<polygon points="466.0,189.6 476.0,192.1 476.0,197.4 466.0,194.8" fill="#10989c"/>
<line x1="467.5" y1="190.5" x2="474.5" y2="196.5" stroke="#001018" stroke-width="1"/>
<polygon points="476.0,192.1 486.0,194.6 486.0,199.9 476.0,197.4" fill="#18a0a0"/>
<line x1="477.5" y1="193.0" x2="484.5" y2="199.1" stroke="#001018" stroke-width="1"/>
<polygon points="486.0,194.6 490.0,195.6 490.0,201.0 486.0,199.9" fill="#10989c"/>
<polygon points="490.0,195.6 499.0,197.9 499.0,203.3 490.0,201.0" fill="#68c0c0"/>
<polygon points="490.0,195.6 497.5,197.5 499.0,202.4 490.0,201.0" fill="#208830"/>
<line x1="491.5" y1="196.6" x2="497.5" y2="202.4" stroke="#001018" stroke-width="1"/>
<polygon points="499.0,197.9 503.0,198.9 503.0,204.3 499.0,203.3" fill="#58c0c0"/>
<polygon points="503.0,198.9 512.0,201.1 512.0,206.6 503.0,204.3" fill="#68c0c0"/>
<polygon points="503.0,198.9 510.5,200.8 512.0,205.7 503.0,204.3" fill="#189828"/>
<line x1="504.5" y1="199.9" x2="510.5" y2="205.7" stroke="#001018" stroke-width="1"/>
<polygon points="512.0,201.1 514.0,201.7 514.0,207.1 512.0,206.6" fill="#28a8b0"/>
<polygon points="514.0,201.7 525.0,204.4 525.0,209.9 514.0,207.1" fill="#10989c"/>
<line x1="515.5" y1="202.7" x2="523.5" y2="209.0" stroke="#001018" stroke-width="1"/>
<polygon points="525.0,204.4 535.0,206.9 535.0,212.5 525.0,209.9" fill="#28a8b0"/>
<line x1="526.5" y1="205.5" x2="533.5" y2="211.5" stroke="#001018" stroke-width="1"/>
<polygon points="535.0,206.9 545.0,209.4 545.0,215.1 535.0,212.5" fill="#10989c"/>
<line x1="536.5" y1="208.0" x2="543.5" y2="214.0" stroke="#001018" stroke-width="1"/>
<polygon points="545.0,209.4 549.0,210.4 549.0,216.1 545.0,215.1" fill="#60c0c8"/>
<polygon points="458.0,193.9 463.0,195.2 463.0,200.4 458.0,199.1" fill="#58c0c0"/>
<polygon points="463.0,195.2 466.0,196.0 466.0,201.2 463.0,200.4" fill="#20a8a8"/>
<polygon points="466.0,196.0 476.0,198.6 476.0,203.8 466.0,201.2" fill="#18a0a0"/>
<line x1="467.5" y1="196.9" x2="474.5" y2="203.0" stroke="#001018" stroke-width="1"/>
<polygon points="476.0,198.6 486.0,201.1 486.0,206.4 476.0,203.8" fill="#28a8b0"/>
<line x1="477.5" y1="199.5" x2="484.5" y2="205.6" stroke="#001018" stroke-width="1"/>
<polygon points="486.0,201.1 490.0,202.2 490.0,207.5 486.0,206.4" fill="#18a0a0"/>
<polygon points="490.0,202.2 499.0,204.5 499.0,209.8 490.0,207.5" fill="#68c0c0"/>
<polygon points="490.0,202.2 497.5,204.1 499.0,208.9 490.0,207.5" fill="#189828"/>
<line x1="491.5" y1="203.1" x2="497.5" y2="208.9" stroke="#001018" stroke-width="1"/>
<polygon points="499.0,204.5 503.0,205.5 503.0,210.9 499.0,209.8" fill="#50b8b8"/>
<polygon points="503.0,205.5 512.0,207.8 512.0,213.2 503.0,210.9" fill="#68c0c0"/>
<polygon points="503.0,205.5 510.5,207.4 512.0,212.3 503.0,210.9" fill="#20a030"/>
<line x1="504.5" y1="206.5" x2="510.5" y2="212.3" stroke="#001018" stroke-width="1"/>
<polygon points="512.0,207.8 514.0,208.3 514.0,213.8 512.0,213.2" fill="#20a8a8"/>
<polygon points="514.0,208.3 525.0,211.1 525.0,216.7 514.0,213.8" fill="#28a8b0"/>
<line x1="515.5" y1="209.3" x2="523.5" y2="215.7" stroke="#001018" stroke-width="1"/>
<polygon points="525.0,211.1 535.0,213.7 535.0,219.3 525.0,216.7" fill="#20a8a8"/>
<line x1="526.5" y1="212.2" x2="533.5" y2="218.3" stroke="#001018" stroke-width="1"/>
<polygon points="535.0,213.7 545.0,216.3 545.0,221.9 535.0,219.3" fill="#28a8b0"/>
<line x1="536.5" y1="214.8" x2="543.5" y2="220.9" stroke="#001018" stroke-width="1"/>
<polygon points="545.0,216.3 549.0,217.3 549.0,223.0 545.0,221.9" fill="#60c0c8"/>
<polygon points="458.0,200.3 463.0,201.6 463.0,206.7 458.0,205.4" fill="#50b8b8"/>
<polygon points="463.0,201.6 466.0,202.4 466.0,207.5 463.0,206.7" fill="#18a0a0"/>
<polygon points="466.0,202.4 476.0,205.0 476.0,210.2 466.0,207.5" fill="#20a8a8"/>
<line x1="467.5" y1="203.2" x2="474.5" y2="209.4" stroke="#001018" stroke-width="1"/>
<polygon points="476.0,205.0 486.0,207.6 486.0,212.9 476.0,210.2" fill="#28a8b0"/>
<line x1="477.5" y1="205.9" x2="484.5" y2="212.1" stroke="#001018" stroke-width="1"/>
<polygon points="486.0,207.6 490.0,208.7 490.0,214.0 486.0,212.9" fill="#10989c"/>
<polygon points="490.0,208.7 499.0,211.0 499.0,216.4 490.0,214.0" fill="#68c0c0"/>
<polygon points="490.0,208.7 497.5,210.6 499.0,215.5 490.0,214.0" fill="#208830"/>
<line x1="491.5" y1="209.6" x2="497.5" y2="215.5" stroke="#001018" stroke-width="1"/>
<polygon points="499.0,211.0 503.0,212.1 503.0,217.5 499.0,216.4" fill="#50b8b8"/>
<polygon points="503.0,212.1 512.0,214.4 512.0,219.9 503.0,217.5" fill="#68c0c0"/>
<polygon points="503.0,212.1 510.5,214.1 512.0,219.0 503.0,217.5" fill="#208830"/>
<line x1="504.5" y1="213.1" x2="510.5" y2="219.0" stroke="#001018" stroke-width="1"/>
<polygon points="512.0,214.4 514.0,215.0 514.0,220.4 512.0,219.9" fill="#20a8a8"/>
<polygon points="514.0,215.0 525.0,217.9 525.0,223.4 514.0,220.4" fill="#10989c"/>
<line x1="515.5" y1="216.0" x2="523.5" y2="222.4" stroke="#001018" stroke-width="1"/>
<polygon points="525.0,217.9 535.0,220.5 535.0,226.1 525.0,223.4" fill="#10989c"/>
<line x1="526.5" y1="218.9" x2="533.5" y2="225.1" stroke="#001018" stroke-width="1"/>
<polygon points="535.0,220.5 545.0,223.1 545.0,228.8 535.0,226.1" fill="#28a8b0"/>
<line x1="536.5" y1="221.6" x2="543.5" y2="227.7" stroke="#001018" stroke-width="1"/>
<polygon points="545.0,223.1 549.0,224.2 549.0,229.8 545.0,228.8" fill="#50b8b8"/>
<polygon points="458.0,206.6 463.0,207.9 463.0,213.1 458.0,211.7" fill="#58c0c0"/>
<polygon points="463.0,207.9 466.0,208.7 466.0,213.9 463.0,213.1" fill="#10989c"/>
<polygon points="466.0,208.7 476.0,211.4 476.0,216.6 466.0,213.9" fill="#20a8a8"/>
<line x1="467.5" y1="209.6" x2="474.5" y2="215.8" stroke="#001018" stroke-width="1"/>
<polygon points="476.0,211.4 486.0,214.1 486.0,219.4 476.0,216.6" fill="#10989c"/>
<line x1="477.5" y1="212.3" x2="484.5" y2="218.5" stroke="#001018" stroke-width="1"/>
<polygon points="486.0,214.1 490.0,215.2 490.0,220.5 486.0,219.4" fill="#28a8b0"/>
<polygon points="490.0,215.2 499.0,217.6 499.0,223.0 490.0,220.5" fill="#68c0c0"/>
<polygon points="490.0,215.2 497.5,217.2 499.0,222.1 490.0,220.5" fill="#189828"/>
<line x1="491.5" y1="216.1" x2="497.5" y2="222.1" stroke="#001018" stroke-width="1"/>
<polygon points="499.0,217.6 503.0,218.7 503.0,224.1 499.0,223.0" fill="#60c0c8"/>
<polygon points="503.0,218.7 512.0,221.1 512.0,226.5 503.0,224.1" fill="#68c0c0"/>
<polygon points="503.0,218.7 510.5,220.7 512.0,225.6 503.0,224.1" fill="#208830"/>
<line x1="504.5" y1="219.7" x2="510.5" y2="225.6" stroke="#001018" stroke-width="1"/>
<polygon points="512.0,221.1 514.0,221.6 514.0,227.1 512.0,226.5" fill="#18a0a0"/>
<polygon points="514.0,221.6 525.0,224.6 525.0,230.1 514.0,227.1" fill="#18a0a0"/>
<line x1="515.5" y1="222.7" x2="523.5" y2="229.2" stroke="#001018" stroke-width="1"/>
<polygon points="525.0,224.6 535.0,227.3 535.0,232.9 525.0,230.1" fill="#28a8b0"/>
<line x1="526.5" y1="225.7" x2="533.5" y2="231.9" stroke="#001018" stroke-width="1"/>
<polygon points="535.0,227.3 545.0,230.0 545.0,235.6 535.0,232.9" fill="#18a0a0"/>
<line x1="536.5" y1="228.4" x2="543.5" y2="234.6" stroke="#001018" stroke-width="1"/>
<polygon points="545.0,230.0 549.0,231.0 549.0,236.7 545.0,235.6" fill="#50b8b8"/>
<polygon points="458.0,212.9 463.0,214.3 463.0,219.4 458.0,218.0" fill="#58c0c0"/>
<polygon points="463.0,214.3 466.0,215.1 466.0,220.3 463.0,219.4" fill="#28a8b0"/>
<polygon points="466.0,215.1 476.0,217.8 476.0,223.1 466.0,220.3" fill="#18a0a0"/>
<line x1="467.5" y1="216.0" x2="474.5" y2="222.3" stroke="#001018" stroke-width="1"/>
<polygon points="476.0,217.8 486.0,220.6 486.0,225.9 476.0,223.1" fill="#28a8b0"/>
<line x1="477.5" y1="218.8" x2="484.5" y2="225.0" stroke="#001018" stroke-width="1"/>
<polygon points="486.0,220.6 490.0,221.7 490.0,227.0 486.0,225.9" fill="#18a0a0"/>
<polygon points="490.0,221.7 499.0,224.2 499.0,229.5 490.0,227.0" fill="#68c0c0"/>
<polygon points="490.0,221.7 497.5,223.8 499.0,228.6 490.0,227.0" fill="#208830"/>
<line x1="491.5" y1="222.7" x2="497.5" y2="228.7" stroke="#001018" stroke-width="1"/>
<polygon points="499.0,224.2 503.0,225.3 503.0,230.7 499.0,229.5" fill="#58c0c0"/>
<polygon points="503.0,225.3 512.0,227.7 512.0,233.2 503.0,230.7" fill="#68c0c0"/>
<polygon points="503.0,225.3 510.5,227.3 512.0,232.3 503.0,230.7" fill="#189828"/>
<line x1="504.5" y1="226.3" x2="510.5" y2="232.3" stroke="#001018" stroke-width="1"/>
<polygon points="512.0,227.7 514.0,228.3 514.0,233.8 512.0,233.2" fill="#28a8b0"/>
<polygon points="514.0,228.3 525.0,231.3 525.0,236.9 514.0,233.8" fill="#28a8b0"/>
<line x1="515.5" y1="229.3" x2="523.5" y2="235.9" stroke="#001018" stroke-width="1"/>
<polygon points="525.0,231.3 535.0,234.1 535.0,239.7 525.0,236.9" fill="#28a8b0"/>
<line x1="526.5" y1="232.4" x2="533.5" y2="238.7" stroke="#001018" stroke-width="1"/>
<polygon points="535.0,234.1 545.0,236.8 545.0,242.5 535.0,239.7" fill="#10989c"/>
<line x1="536.5" y1="235.2" x2="543.5" y2="241.4" stroke="#001018" stroke-width="1"/>
<polygon points="545.0,236.8 549.0,237.9 549.0,243.6 545.0,242.5" fill="#58c0c0"/>
<polygon points="458.0,219.2 463.0,220.6 463.0,225.8 458.0,224.3" fill="#60c0c8"/>
<polygon points="463.0,220.6 466.0,221.5 466.0,226.6 463.0,225.8" fill="#28a8b0"/>
<polygon points="466.0,221.5 476.0,224.3 476.0,229.5 466.0,226.6" fill="#20a8a8"/>
<line x1="467.5" y1="222.3" x2="474.5" y2="228.7" stroke="#001018" stroke-width="1"/>
<polygon points="476.0,224.3 486.0,227.1 486.0,232.4 476.0,229.5" fill="#10989c"/>
<line x1="477.5" y1="225.2" x2="484.5" y2="231.5" stroke="#001018" stroke-width="1"/>
<polygon points="486.0,227.1 490.0,228.2 490.0,233.5 486.0,232.4" fill="#28a8b0"/>
<polygon points="490.0,228.2 499.0,230.7 499.0,236.1 490.0,233.5" fill="#68c0c0"/>
<polygon points="490.0,228.2 497.5,230.3 499.0,235.2 490.0,233.5" fill="#20a030"/>
<line x1="491.5" y1="229.2" x2="497.5" y2="235.2" stroke="#001018" stroke-width="1"/>
<polygon points="499.0,230.7 503.0,231.9 503.0,237.3 499.0,236.1" fill="#50b8b8"/>
<polygon points="503.0,231.9 512.0,234.4 512.0,239.8 503.0,237.3" fill="#68c0c0"/>
<polygon points="503.0,231.9 510.5,234.0 512.0,238.9 503.0,237.3" fill="#20a030"/>
<line x1="504.5" y1="232.9" x2="510.5" y2="238.9" stroke="#001018" stroke-width="1"/>
<polygon points="512.0,234.4 514.0,235.0 514.0,240.4 512.0,239.8" fill="#18a0a0"/>
<polygon points="514.0,235.0 525.0,238.1 525.0,243.6 514.0,240.4" fill="#20a8a8"/>
<line x1="515.5" y1="236.0" x2="523.5" y2="242.6" stroke="#001018" stroke-width="1"/>
<polygon points="525.0,238.1 535.0,240.9 535.0,246.5 525.0,243.6" fill="#28a8b0"/>
<line x1="526.5" y1="239.1" x2="533.5" y2="245.5" stroke="#001018" stroke-width="1"/>
<polygon points="535.0,240.9 545.0,243.7 545.0,249.3 535.0,246.5" fill="#18a0a0"/>
<line x1="536.5" y1="242.0" x2="543.5" y2="248.3" stroke="#001018" stroke-width="1"/>
<polygon points="545.0,243.7 549.0,244.8 549.0,250.5 545.0,249.3" fill="#60c0c8"/>
<polygon points="458.0,225.5 463.0,227.0 463.0,232.1 458.0,230.6" fill="#58c0c0"/>
<polygon points="463.0,227.0 466.0,227.8 466.0,233.0 463.0,232.1" fill="#18a0a0"/>
<polygon points="466.0,227.8 476.0,230.7 476.0,235.9 466.0,233.0" fill="#18a0a0"/>
<line x1="467.5" y1="228.7" x2="474.5" y2="235.1" stroke="#001018" stroke-width="1"/>
<polygon points="476.0,230.7 486.0,233.6 486.0,238.9 476.0,235.9" fill="#20a8a8"/>
<line x1="477.5" y1="231.6" x2="484.5" y2="238.0" stroke="#001018" stroke-width="1"/>
<polygon points="486.0,233.6 490.0,234.7 490.0,240.0 486.0,238.9" fill="#20a8a8"/>
<polygon points="490.0,234.7 499.0,237.3 499.0,242.7 490.0,240.0" fill="#68c0c0"/>
<polygon points="490.0,234.7 497.5,236.9 499.0,241.8 490.0,240.0" fill="#189828"/>
<line x1="491.5" y1="235.7" x2="497.5" y2="241.8" stroke="#001018" stroke-width="1"/>
<polygon points="499.0,237.3 503.0,238.5 503.0,243.9 499.0,242.7" fill="#58c0c0"/>
<polygon points="503.0,238.5 512.0,241.0 512.0,246.5 503.0,243.9" fill="#68c0c0"/>
<polygon points="503.0,238.5 510.5,240.6 512.0,245.6 503.0,243.9" fill="#208830"/>
<line x1="504.5" y1="239.5" x2="510.5" y2="245.6" stroke="#001018" stroke-width="1"/>
<polygon points="512.0,241.0 514.0,241.6 514.0,247.1 512.0,246.5" fill="#10989c"/>
<polygon points="514.0,241.6 525.0,244.8 525.0,250.3 514.0,247.1" fill="#10989c"/>
<line x1="515.5" y1="242.6" x2="523.5" y2="249.3" stroke="#001018" stroke-width="1"/>
<polygon points="525.0,244.8 535.0,247.7 535.0,253.2 525.0,250.3" fill="#10989c"/>
<line x1="526.5" y1="245.8" x2="533.5" y2="252.2" stroke="#001018" stroke-width="1"/>
<polygon points="535.0,247.7 545.0,250.5 545.0,256.2 535.0,253.2" fill="#20a8a8"/>
<line x1="536.5" y1="248.7" x2="543.5" y2="255.2" stroke="#001018" stroke-width="1"/>
<polygon points="545.0,250.5 549.0,251.7 549.0,257.4 545.0,256.2" fill="#50b8b8"/>
<polygon points="458.0,231.8 463.0,233.3 463.0,238.5 458.0,237.0" fill="#60c0c8"/>
<polygon points="463.0,233.3 466.0,234.2 466.0,239.4 463.0,238.5" fill="#18a0a0"/>
<polygon points="466.0,234.2 476.0,237.1 476.0,242.4 466.0,239.4" fill="#28a8b0"/>
<line x1="467.5" y1="235.1" x2="474.5" y2="241.5" stroke="#001018" stroke-width="1"/>
<polygon points="476.0,237.1 486.0,240.1 486.0,245.4 476.0,242.4" fill="#18a0a0"/>
<line x1="477.5" y1="238.0" x2="484.5" y2="244.5" stroke="#001018" stroke-width="1"/>
<polygon points="486.0,240.1 490.0,241.2 490.0,246.6 486.0,245.4" fill="#10989c"/>
<polygon points="490.0,241.2 499.0,243.9 499.0,249.2 490.0,246.6" fill="#68c0c0"/>
<polygon points="490.0,241.2 497.5,243.4 499.0,248.3 490.0,246.6" fill="#208830"/>
<line x1="491.5" y1="242.2" x2="497.5" y2="248.4" stroke="#001018" stroke-width="1"/>
<polygon points="499.0,243.9 503.0,245.1 503.0,250.4 499.0,249.2" fill="#58c0c0"/>
<polygon points="503.0,245.1 512.0,247.7 512.0,253.1 503.0,250.4" fill="#68c0c0"/>
<polygon points="503.0,245.1 510.5,247.3 512.0,252.2 503.0,250.4" fill="#208830"/>
<line x1="504.5" y1="246.0" x2="510.5" y2="252.2" stroke="#001018" stroke-width="1"/>
<polygon points="512.0,247.7 514.0,248.3 514.0,253.7 512.0,253.1" fill="#28a8b0"/>
<polygon points="514.0,248.3 525.0,251.5 525.0,257.0 514.0,253.7" fill="#18a0a0"/>
<line x1="515.5" y1="249.3" x2="523.5" y2="256.1" stroke="#001018" stroke-width="1"/>
<polygon points="525.0,251.5 535.0,254.4 535.0,260.0 525.0,257.0" fill="#28a8b0"/>
<line x1="526.5" y1="252.6" x2="533.5" y2="259.0" stroke="#001018" stroke-width="1"/>
<polygon points="535.0,254.4 545.0,257.4 545.0,263.0 535.0,260.0" fill="#28a8b0"/>
<line x1="536.5" y1="255.5" x2="543.5" y2="262.0" stroke="#001018" stroke-width="1"/>
<polygon points="545.0,257.4 549.0,258.6 549.0,264.2 545.0,263.0" fill="#50b8b8"/>
<polygon points="458.0,238.2 463.0,239.7 463.0,244.8 458.0,243.3" fill="#50b8b8"/>
<polygon points="463.0,239.7 466.0,240.6 466.0,245.7 463.0,244.8" fill="#20a8a8"/>
<polygon points="466.0,240.6 476.0,243.6 476.0,248.8 466.0,245.7" fill="#20a8a8"/>
<line x1="467.5" y1="241.4" x2="474.5" y2="248.0" stroke="#001018" stroke-width="1"/>
<polygon points="476.0,243.6 486.0,246.6 486.0,251.8 476.0,248.8" fill="#20a8a8"/>
<line x1="477.5" y1="244.5" x2="484.5" y2="251.0" stroke="#001018" stroke-width="1"/>
<polygon points="486.0,246.6 490.0,247.8 490.0,253.1 486.0,251.8" fill="#20a8a8"/>
<polygon points="490.0,247.8 499.0,250.4 499.0,255.8 490.0,253.1" fill="#68c0c0"/>
<polygon points="490.0,247.8 497.5,250.0 499.0,254.9 490.0,253.1" fill="#208830"/>
<line x1="491.5" y1="248.7" x2="497.5" y2="254.9" stroke="#001018" stroke-width="1"/>
<polygon points="499.0,250.4 503.0,251.6 503.0,257.0 499.0,255.8" fill="#50b8b8"/>
<polygon points="503.0,251.6 512.0,254.3 512.0,259.8 503.0,257.0" fill="#68c0c0"/>
<polygon points="503.0,251.6 510.5,253.9 512.0,258.9 503.0,257.0" fill="#208830"/>
<line x1="504.5" y1="252.6" x2="510.5" y2="258.9" stroke="#001018" stroke-width="1"/>
<polygon points="512.0,254.3 514.0,254.9 514.0,260.4 512.0,259.8" fill="#20a8a8"/>
<polygon points="514.0,254.9 525.0,258.2 525.0,263.8 514.0,260.4" fill="#20a8a8"/>
<line x1="515.5" y1="256.0" x2="523.5" y2="262.8" stroke="#001018" stroke-width="1"/>
<polygon points="525.0,258.2 535.0,261.2 535.0,266.8 525.0,263.8" fill="#10989c"/>
<line x1="526.5" y1="259.3" x2="533.5" y2="265.8" stroke="#001018" stroke-width="1"/>
<polygon points="535.0,261.2 545.0,264.2 545.0,269.9 535.0,266.8" fill="#20a8a8"/>
<line x1="536.5" y1="262.3" x2="543.5" y2="268.9" stroke="#001018" stroke-width="1"/>
<polygon points="545.0,264.2 549.0,265.4 549.0,271.1 545.0,269.9" fill="#60c0c8"/>
<polygon points="458.0,244.5 463.0,246.0 463.0,251.2 458.0,249.6" fill="#50b8b8"/>
<polygon points="463.0,246.0 466.0,246.9 466.0,252.1 463.0,251.2" fill="#10989c"/>
<polygon points="466.0,246.9 476.0,250.0 476.0,255.2 466.0,252.1" fill="#20a8a8"/>
<line x1="467.5" y1="247.8" x2="474.5" y2="254.4" stroke="#001018" stroke-width="1"/>
<polygon points="476.0,250.0 486.0,253.0 486.0,258.3 476.0,255.2" fill="#20a8a8"/>
<line x1="477.5" y1="250.9" x2="484.5" y2="257.5" stroke="#001018" stroke-width="1"/>
<polygon points="486.0,253.0 490.0,254.3 490.0,259.6 486.0,258.3" fill="#20a8a8"/>
<polygon points="490.0,254.3 499.0,257.0 499.0,262.4 490.0,259.6" fill="#68c0c0"/>
<polygon points="490.0,254.3 497.5,256.6 499.0,261.5 490.0,259.6" fill="#189828"/>
<line x1="491.5" y1="255.2" x2="497.5" y2="261.5" stroke="#001018" stroke-width="1"/>
<polygon points="499.0,257.0 503.0,258.2 503.0,263.6 499.0,262.4" fill="#58c0c0"/>
<polygon points="503.0,258.2 512.0,261.0 512.0,266.4 503.0,263.6" fill="#68c0c0"/>
<polygon points="503.0,258.2 510.5,260.5 512.0,265.5 503.0,263.6" fill="#189828"/>
<line x1="504.5" y1="259.2" x2="510.5" y2="265.5" stroke="#001018" stroke-width="1"/>
<polygon points="512.0,261.0 514.0,261.6 514.0,267.1 512.0,266.4" fill="#20a8a8"/>
<polygon points="514.0,261.6 525.0,265.0 525.0,270.5 514.0,267.1" fill="#18a0a0"/>
<line x1="515.5" y1="262.6" x2="523.5" y2="269.5" stroke="#001018" stroke-width="1"/>
<polygon points="525.0,265.0 535.0,268.0 535.0,273.6 525.0,270.5" fill="#10989c"/>
<line x1="526.5" y1="266.0" x2="533.5" y2="272.6" stroke="#001018" stroke-width="1"/>
<polygon points="535.0,268.0 545.0,271.1 545.0,276.7 535.0,273.6" fill="#28a8b0"/>
<line x1="536.5" y1="269.1" x2="543.5" y2="275.7" stroke="#001018" stroke-width="1"/>
<polygon points="545.0,271.1 549.0,272.3 549.0,278.0 545.0,276.7" fill="#58c0c0"/>
<polygon points="458.0,250.8 463.0,252.4 463.0,257.5 458.0,255.9" fill="#60c0c8"/>
<polygon points="463.0,252.4 466.0,253.3 466.0,258.5 463.0,257.5" fill="#28a8b0"/>
<polygon points="466.0,253.3 476.0,256.4 476.0,261.6 466.0,258.5" fill="#20a8a8"/>
<line x1="467.5" y1="254.2" x2="474.5" y2="260.8" stroke="#001018" stroke-width="1"/>
<polygon points="476.0,256.4 486.0,259.5 486.0,264.8 476.0,261.6" fill="#20a8a8"/>
<line x1="477.5" y1="257.3" x2="484.5" y2="264.0" stroke="#001018" stroke-width="1"/>
<polygon points="486.0,259.5 490.0,260.8 490.0,266.1 486.0,264.8" fill="#28a8b0"/>
<polygon points="490.0,260.8 499.0,263.6 499.0,269.0 490.0,266.1" fill="#68c0c0"/>
<polygon points="490.0,260.8 497.5,263.1 499.0,268.1 490.0,266.1" fill="#208830"/>
<line x1="491.5" y1="261.7" x2="497.5" y2="268.1" stroke="#001018" stroke-width="1"/>
<polygon points="499.0,263.6 503.0,264.8 503.0,270.2 499.0,269.0" fill="#50b8b8"/>
<polygon points="503.0,264.8 512.0,267.6 512.0,273.1 503.0,270.2" fill="#68c0c0"/>
<polygon points="503.0,264.8 510.5,267.2 512.0,272.2 503.0,270.2" fill="#189828"/>
<line x1="504.5" y1="265.8" x2="510.5" y2="272.2" stroke="#001018" stroke-width="1"/>
<polygon points="512.0,267.6 514.0,268.3 514.0,273.7 512.0,273.1" fill="#18a0a0"/>
<polygon points="514.0,268.3 525.0,271.7 525.0,277.2 514.0,273.7" fill="#20a8a8"/>
<line x1="515.5" y1="269.3" x2="523.5" y2="276.3" stroke="#001018" stroke-width="1"/>
<polygon points="525.0,271.7 535.0,274.8 535.0,280.4 525.0,277.2" fill="#10989c"/>
<line x1="526.5" y1="272.8" x2="533.5" y2="279.4" stroke="#001018" stroke-width="1"/>
<polygon points="535.0,274.8 545.0,277.9 545.0,283.6 535.0,280.4" fill="#10989c"/>
<line x1="536.5" y1="275.9" x2="543.5" y2="282.6" stroke="#001018" stroke-width="1"/>
<polygon points="545.0,277.9 549.0,279.2 549.0,284.9 545.0,283.6" fill="#58c0c0"/>
<polygon points="458.0,257.1 463.0,258.7 463.0,263.9 458.0,262.2" fill="#50b8b8"/>
<polygon points="463.0,258.7 466.0,259.7 466.0,264.8 463.0,263.9" fill="#10989c"/>
<polygon points="466.0,259.7 476.0,262.8 476.0,268.1 466.0,264.8" fill="#20a8a8"/>
<line x1="467.5" y1="260.5" x2="474.5" y2="267.3" stroke="#001018" stroke-width="1"/>
<polygon points="476.0,262.8 486.0,266.0 486.0,271.3 476.0,268.1" fill="#18a0a0"/>
<line x1="477.5" y1="263.8" x2="484.5" y2="270.5" stroke="#001018" stroke-width="1"/>
<polygon points="486.0,266.0 490.0,267.3 490.0,272.6 486.0,271.3" fill="#28a8b0"/>
<polygon points="490.0,267.3 499.0,270.2 499.0,275.5 490.0,272.6" fill="#68c0c0"/>
<polygon points="490.0,267.3 497.5,269.7 499.0,274.6 490.0,272.6" fill="#189828"/>
<line x1="491.5" y1="268.3" x2="497.5" y2="274.6" stroke="#001018" stroke-width="1"/>
<polygon points="499.0,270.2 503.0,271.4 503.0,276.8 499.0,275.5" fill="#58c0c0"/>
<polygon points="503.0,271.4 512.0,274.3 512.0,279.7 503.0,276.8" fill="#68c0c0"/>
<polygon points="503.0,271.4 510.5,273.8 512.0,278.8 503.0,276.8" fill="#189828"/>
<line x1="504.5" y1="272.4" x2="510.5" y2="278.8" stroke="#001018" stroke-width="1"/>
<polygon points="512.0,274.3 514.0,274.9 514.0,280.4 512.0,279.7" fill="#28a8b0"/>
<polygon points="514.0,274.9 525.0,278.4 525.0,284.0 514.0,280.4" fill="#20a8a8"/>
<line x1="515.5" y1="276.0" x2="523.5" y2="283.0" stroke="#001018" stroke-width="1"/>
<polygon points="525.0,278.4 535.0,281.6 535.0,287.2 525.0,284.0" fill="#20a8a8"/>
<line x1="526.5" y1="279.5" x2="533.5" y2="286.2" stroke="#001018" stroke-width="1"/>
<polygon points="535.0,281.6 545.0,284.8 545.0,290.4 535.0,287.2" fill="#20a8a8"/>
<line x1="536.5" y1="282.7" x2="543.5" y2="289.4" stroke="#001018" stroke-width="1"/>
<polygon points="545.0,284.8 549.0,286.1 549.0,291.7 545.0,290.4" fill="#58c0c0"/>
<polygon points="458.0,263.4 463.0,265.1 463.0,270.2 458.0,268.6" fill="#58c0c0"/>
<polygon points="463.0,265.1 466.0,266.0 466.0,271.2 463.0,270.2" fill="#20a8a8"/>
<polygon points="466.0,266.0 476.0,269.3 476.0,274.5 466.0,271.2" fill="#20a8a8"/>
<line x1="467.5" y1="266.9" x2="474.5" y2="273.7" stroke="#001018" stroke-width="1"/>
<polygon points="476.0,269.3 486.0,272.5 486.0,277.8 476.0,274.5" fill="#10989c"/>
<line x1="477.5" y1="270.2" x2="484.5" y2="277.0" stroke="#001018" stroke-width="1"/>
<polygon points="486.0,272.5 490.0,273.8 490.0,279.1 486.0,277.8" fill="#18a0a0"/>
<polygon points="490.0,273.8 499.0,276.7 499.0,282.1 490.0,279.1" fill="#68c0c0"/>
<polygon points="490.0,273.8 497.5,276.2 499.0,281.2 490.0,279.1" fill="#208830"/>
<line x1="491.5" y1="274.8" x2="497.5" y2="281.2" stroke="#001018" stroke-width="1"/>
<polygon points="499.0,276.7 503.0,278.0 503.0,283.4 499.0,282.1" fill="#58c0c0"/>
<polygon points="503.0,278.0 512.0,280.9 512.0,286.4 503.0,283.4" fill="#68c0c0"/>
<polygon points="503.0,278.0 510.5,280.5 512.0,285.5 503.0,283.4" fill="#189828"/>
<line x1="504.5" y1="279.0" x2="510.5" y2="285.5" stroke="#001018" stroke-width="1"/>
<polygon points="512.0,280.9 514.0,281.6 514.0,287.0 512.0,286.4" fill="#28a8b0"/>
<polygon points="514.0,281.6 525.0,285.2 525.0,290.7 514.0,287.0" fill="#18a0a0"/>
<line x1="515.5" y1="282.6" x2="523.5" y2="289.7" stroke="#001018" stroke-width="1"/>
<polygon points="525.0,285.2 535.0,288.4 535.0,294.0 525.0,290.7" fill="#18a0a0"/>
<line x1="526.5" y1="286.2" x2="533.5" y2="293.0" stroke="#001018" stroke-width="1"/>
<polygon points="535.0,288.4 545.0,291.6 545.0,297.3 535.0,294.0" fill="#10989c"/>
<line x1="536.5" y1="289.5" x2="543.5" y2="296.3" stroke="#001018" stroke-width="1"/>
<polygon points="545.0,291.6 549.0,292.9 549.0,298.6 545.0,297.3" fill="#60c0c8"/>
<polygon points="458.0,269.8 463.0,271.4 463.0,276.6 458.0,274.9" fill="#60c0c8"/>
<polygon points="463.0,271.4 466.0,272.4 466.0,277.6 463.0,276.6" fill="#28a8b0"/>
<polygon points="466.0,272.4 476.0,275.7 476.0,280.9 466.0,277.6" fill="#10989c"/>
<line x1="467.5" y1="273.3" x2="474.5" y2="280.1" stroke="#001018" stroke-width="1"/>
<polygon points="476.0,275.7 486.0,279.0 486.0,284.3 476.0,280.9" fill="#28a8b0"/>
<line x1="477.5" y1="276.6" x2="484.5" y2="283.4" stroke="#001018" stroke-width="1"/>
<polygon points="486.0,279.0 490.0,280.3 490.0,285.6 486.0,284.3" fill="#20a8a8"/>
<polygon points="490.0,280.3 499.0,283.3 499.0,288.7 490.0,285.6" fill="#68c0c0"/>
<polygon points="490.0,280.3 497.5,282.8 499.0,287.8 490.0,285.6" fill="#208830"/>
<line x1="491.5" y1="281.3" x2="497.5" y2="287.8" stroke="#001018" stroke-width="1"/>
<polygon points="499.0,283.3 503.0,284.6 503.0,290.0 499.0,288.7" fill="#60c0c8"/>
<polygon points="503.0,284.6 512.0,287.6 512.0,293.0 503.0,290.0" fill="#68c0c0"/>
<polygon points="503.0,284.6 510.5,287.1 512.0,292.1 503.0,290.0" fill="#189828"/>
<line x1="504.5" y1="285.6" x2="510.5" y2="292.1" stroke="#001018" stroke-width="1"/>
<polygon points="512.0,287.6 514.0,288.2 514.0,293.7 512.0,293.0" fill="#18a0a0"/>
<polygon points="514.0,288.2 525.0,291.9 525.0,297.4 514.0,293.7" fill="#20a8a8"/>
<line x1="515.5" y1="289.3" x2="523.5" y2="296.4" stroke="#001018" stroke-width="1"/>
<polygon points="525.0,291.9 535.0,295.2 535.0,300.8 525.0,297.4" fill="#20a8a8"/>
<line x1="526.5" y1="292.9" x2="533.5" y2="299.8" stroke="#001018" stroke-width="1"/>
<polygon points="535.0,295.2 545.0,298.5 545.0,304.1 535.0,300.8" fill="#28a8b0"/>
<line x1="536.5" y1="296.3" x2="543.5" y2="303.1" stroke="#001018" stroke-width="1"/>
<polygon points="545.0,298.5 549.0,299.8 549.0,305.5 545.0,304.1" fill="#60c0c8"/>
<polygon points="458.0,276.1 463.0,277.8 463.0,282.9 458.0,281.2" fill="#60c0c8"/>
<polygon points="463.0,277.8 466.0,278.8 466.0,283.9 463.0,282.9" fill="#10989c"/>
<polygon points="466.0,278.8 476.0,282.1 476.0,287.4 466.0,283.9" fill="#28a8b0"/>
<line x1="467.5" y1="279.6" x2="474.5" y2="286.5" stroke="#001018" stroke-width="1"/>
<polygon points="476.0,282.1 486.0,285.5 486.0,290.8 476.0,287.4" fill="#20a8a8"/>
<line x1="477.5" y1="283.0" x2="484.5" y2="289.9" stroke="#001018" stroke-width="1"/>
<polygon points="486.0,285.5 490.0,286.8 490.0,292.2 486.0,290.8" fill="#20a8a8"/>
<polygon points="490.0,286.8 499.0,289.9 499.0,295.2 490.0,292.2" fill="#68c0c0"/>
<polygon points="490.0,286.8 497.5,289.4 499.0,294.3 490.0,292.2" fill="#189828"/>
<line x1="491.5" y1="287.8" x2="497.5" y2="294.3" stroke="#001018" stroke-width="1"/>
<polygon points="499.0,289.9 503.0,291.2 503.0,296.6 499.0,295.2" fill="#50b8b8"/>
<polygon points="503.0,291.2 512.0,294.2 512.0,299.7 503.0,296.6" fill="#68c0c0"/>
<polygon points="503.0,291.2 510.5,293.7 512.0,298.8 503.0,296.6" fill="#189828"/>
<line x1="504.5" y1="292.2" x2="510.5" y2="298.8" stroke="#001018" stroke-width="1"/>
<polygon points="512.0,294.2 514.0,294.9 514.0,300.4 512.0,299.7" fill="#10989c"/>
<polygon points="514.0,294.9 525.0,298.6 525.0,304.1 514.0,300.4" fill="#18a0a0"/>
<line x1="515.5" y1="295.9" x2="523.5" y2="303.2" stroke="#001018" stroke-width="1"/>
<polygon points="525.0,298.6 535.0,302.0 535.0,307.6 525.0,304.1" fill="#28a8b0"/>
<line x1="526.5" y1="299.7" x2="533.5" y2="306.6" stroke="#001018" stroke-width="1"/>
<polygon points="535.0,302.0 545.0,305.3 545.0,311.0 535.0,307.6" fill="#20a8a8"/>
<line x1="536.5" y1="303.1" x2="543.5" y2="310.0" stroke="#001018" stroke-width="1"/>
<polygon points="545.0,305.3 549.0,306.7 549.0,312.4 545.0,311.0" fill="#50b8b8"/>
<polygon points="458.0,282.4 463.0,284.1 463.0,289.3 458.0,287.5" fill="#50b8b8"/>
<polygon points="463.0,284.1 466.0,285.1 466.0,290.3 463.0,289.3" fill="#10989c"/>
<polygon points="466.0,285.1 476.0,288.6 476.0,293.8 466.0,290.3" fill="#10989c"/>
<line x1="467.5" y1="286.0" x2="474.5" y2="293.0" stroke="#001018" stroke-width="1"/>
<polygon points="476.0,288.6 486.0,292.0 486.0,297.3 476.0,293.8" fill="#10989c"/>
<line x1="477.5" y1="289.5" x2="484.5" y2="296.4" stroke="#001018" stroke-width="1"/>
<polygon points="486.0,292.0 490.0,293.4 490.0,298.7 486.0,297.3" fill="#18a0a0"/>
<polygon points="490.0,293.4 499.0,296.4 499.0,301.8 490.0,298.7" fill="#68c0c0"/>
<polygon points="490.0,293.4 497.5,295.9 499.0,300.9 490.0,298.7" fill="#208830"/>
<line x1="491.5" y1="294.3" x2="497.5" y2="300.9" stroke="#001018" stroke-width="1"/>
<polygon points="499.0,296.4 503.0,297.8 503.0,303.2 499.0,301.8" fill="#50b8b8"/>
<polygon points="503.0,297.8 512.0,300.9 512.0,306.3 503.0,303.2" fill="#68c0c0"/>
<polygon points="503.0,297.8 510.5,300.4 512.0,305.4 503.0,303.2" fill="#189828"/>
<line x1="504.5" y1="298.8" x2="510.5" y2="305.4" stroke="#001018" stroke-width="1"/>
<polygon points="512.0,300.9 514.0,301.6 514.0,307.0 512.0,306.3" fill="#28a8b0"/>
<polygon points="514.0,301.6 525.0,305.3 525.0,310.9 514.0,307.0" fill="#20a8a8"/>
<line x1="515.5" y1="302.6" x2="523.5" y2="309.9" stroke="#001018" stroke-width="1"/>
<polygon points="525.0,305.3 535.0,308.8 535.0,314.4 525.0,310.9" fill="#10989c"/>
<line x1="526.5" y1="306.4" x2="533.5" y2="313.4" stroke="#001018" stroke-width="1"/>
<polygon points="535.0,308.8 545.0,312.2 545.0,317.8 535.0,314.4" fill="#10989c"/>
<line x1="536.5" y1="309.9" x2="543.5" y2="316.8" stroke="#001018" stroke-width="1"/>
<polygon points="545.0,312.2 549.0,313.6 549.0,319.2 545.0,317.8" fill="#60c0c8"/>
<polygon points="458.0,288.7 463.0,290.5 463.0,295.6 458.0,293.8" fill="#58c0c0"/>
<polygon points="463.0,290.5 466.0,291.5 466.0,296.7 463.0,295.6" fill="#28a8b0"/>
<polygon points="466.0,291.5 476.0,295.0 476.0,300.2 466.0,296.7" fill="#20a8a8"/>
<line x1="467.5" y1="292.4" x2="474.5" y2="299.4" stroke="#001018" stroke-width="1"/>
<polygon points="476.0,295.0 486.0,298.5 486.0,303.8 476.0,300.2" fill="#20a8a8"/>
<line x1="477.5" y1="295.9" x2="484.5" y2="302.9" stroke="#001018" stroke-width="1"/>
<polygon points="486.0,298.5 490.0,299.9 490.0,305.2 486.0,303.8" fill="#18a0a0"/>
<polygon points="490.0,299.9 499.0,303.0 499.0,308.4 490.0,305.2" fill="#68c0c0"/>
<polygon points="490.0,299.9 497.5,302.5 499.0,307.5 490.0,305.2" fill="#20a030"/>
<line x1="491.5" y1="300.8" x2="497.5" y2="307.5" stroke="#001018" stroke-width="1"/>
<polygon points="499.0,303.0 503.0,304.4 503.0,309.8 499.0,308.4" fill="#60c0c8"/>
<polygon points="503.0,304.4 512.0,307.5 512.0,313.0 503.0,309.8" fill="#68c0c0"/>
<polygon points="503.0,304.4 510.5,307.0 512.0,312.1 503.0,309.8" fill="#20a030"/>
<line x1="504.5" y1="305.4" x2="510.5" y2="312.1" stroke="#001018" stroke-width="1"/>
<polygon points="512.0,307.5 514.0,308.2 514.0,313.7 512.0,313.0" fill="#18a0a0"/>
<polygon points="514.0,308.2 525.0,312.1 525.0,317.6 514.0,313.7" fill="#18a0a0"/>
<line x1="515.5" y1="309.3" x2="523.5" y2="316.6" stroke="#001018" stroke-width="1"/>
<polygon points="525.0,312.1 535.0,315.6 535.0,321.1 525.0,317.6" fill="#10989c"/>
<line x1="526.5" y1="313.1" x2="533.5" y2="320.2" stroke="#001018" stroke-width="1"/>
<polygon points="535.0,315.6 545.0,319.0 545.0,324.7 535.0,321.1" fill="#18a0a0"/>
<line x1="536.5" y1="316.7" x2="543.5" y2="323.7" stroke="#001018" stroke-width="1"/>
<polygon points="545.0,319.0 549.0,320.4 549.0,326.1 545.0,324.7" fill="#58c0c0"/>
<polygon points="458.0,295.0 463.0,296.8 463.0,302.0 458.0,300.1" fill="#60c0c8"/>
<polygon points="463.0,296.8 466.0,297.9 466.0,303.0 463.0,302.0" fill="#10989c"/>
<polygon points="466.0,297.9 476.0,301.4 476.0,306.6 466.0,303.0" fill="#10989c"/>
<line x1="467.5" y1="298.7" x2="474.5" y2="305.8" stroke="#001018" stroke-width="1"/>
<polygon points="476.0,301.4 486.0,305.0 486.0,310.3 476.0,306.6" fill="#20a8a8"/>
<line x1="477.5" y1="302.3" x2="484.5" y2="309.4" stroke="#001018" stroke-width="1"/>
<polygon points="486.0,305.0 490.0,306.4 490.0,311.7 486.0,310.3" fill="#28a8b0"/>
<polygon points="490.0,306.4 499.0,309.6 499.0,314.9 490.0,311.7" fill="#68c0c0"/>
<polygon points="490.0,306.4 497.5,309.0 499.0,314.0 490.0,311.7" fill="#208830"/>
<line x1="491.5" y1="307.3" x2="497.5" y2="314.1" stroke="#001018" stroke-width="1"/>
<polygon points="499.0,309.6 503.0,311.0 503.0,316.4 499.0,314.9" fill="#58c0c0"/>
<polygon points="503.0,311.0 512.0,314.2 512.0,319.6 503.0,316.4" fill="#68c0c0"/>
<polygon points="503.0,311.0 510.5,313.7 512.0,318.7 503.0,316.4" fill="#208830"/>
<line x1="504.5" y1="312.0" x2="510.5" y2="318.7" stroke="#001018" stroke-width="1"/>
<polygon points="512.0,314.2 514.0,314.9 514.0,320.4 512.0,319.6" fill="#18a0a0"/>
<polygon points="514.0,314.9 525.0,318.8 525.0,324.3 514.0,320.4" fill="#28a8b0"/>
<line x1="515.5" y1="315.9" x2="523.5" y2="323.4" stroke="#001018" stroke-width="1"/>
<polygon points="525.0,318.8 535.0,322.3 535.0,327.9 525.0,324.3" fill="#28a8b0"/>
<line x1="526.5" y1="319.9" x2="533.5" y2="326.9" stroke="#001018" stroke-width="1"/>
<polygon points="535.0,322.3 545.0,325.9 545.0,331.5 535.0,327.9" fill="#20a8a8"/>
<line x1="536.5" y1="323.4" x2="543.5" y2="330.5" stroke="#001018" stroke-width="1"/>
<polygon points="545.0,325.9 549.0,327.3 549.0,333.0 545.0,331.5" fill="#50b8b8"/>
<polygon points="458.0,301.3 463.0,303.2 463.0,308.3 458.0,306.5" fill="#58c0c0"/>
<polygon points="463.0,303.2 466.0,304.2 466.0,309.4 463.0,308.3" fill="#28a8b0"/>
<polygon points="466.0,304.2 476.0,307.8 476.0,313.1 466.0,309.4" fill="#18a0a0"/>
<line x1="467.5" y1="305.1" x2="474.5" y2="312.3" stroke="#001018" stroke-width="1"/>
<polygon points="476.0,307.8 486.0,311.5 486.0,316.7 476.0,313.1" fill="#18a0a0"/>
<line x1="477.5" y1="308.8" x2="484.5" y2="315.9" stroke="#001018" stroke-width="1"/>
<polygon points="486.0,311.5 490.0,312.9 490.0,318.2 486.0,316.7" fill="#18a0a0"/>
<polygon points="490.0,312.9 499.0,316.1 499.0,321.5 490.0,318.2" fill="#68c0c0"/>
<polygon points="490.0,312.9 497.5,315.6 499.0,320.6 490.0,318.2" fill="#208830"/>
<line x1="491.5" y1="313.9" x2="497.5" y2="320.6" stroke="#001018" stroke-width="1"/>
<polygon points="499.0,316.1 503.0,317.6 503.0,323.0 499.0,321.5" fill="#58c0c0"/>
<polygon points="503.0,317.6 512.0,320.8 512.0,326.3 503.0,323.0" fill="#68c0c0"/>
<polygon points="503.0,317.6 510.5,320.3 512.0,325.4 503.0,323.0" fill="#20a030"/>
<line x1="504.5" y1="318.6" x2="510.5" y2="325.4" stroke="#001018" stroke-width="1"/>
<polygon points="512.0,320.8 514.0,321.6 514.0,327.0 512.0,326.3" fill="#28a8b0"/>
<polygon points="514.0,321.6 525.0,325.5 525.0,331.1 514.0,327.0" fill="#28a8b0"/>
<line x1="515.5" y1="322.6" x2="523.5" y2="330.1" stroke="#001018" stroke-width="1"/>
<polygon points="525.0,325.5 535.0,329.1 535.0,334.7 525.0,331.1" fill="#18a0a0"/>
<line x1="526.5" y1="326.6" x2="533.5" y2="333.7" stroke="#001018" stroke-width="1"/>
<polygon points="535.0,329.1 545.0,332.7 545.0,338.4 535.0,334.7" fill="#20a8a8"/>
<line x1="536.5" y1="330.2" x2="543.5" y2="337.4" stroke="#001018" stroke-width="1"/>
<polygon points="545.0,332.7 549.0,334.2 549.0,339.9 545.0,338.4" fill="#50b8b8"/>
<polygon points="458.0,307.7 463.0,309.5 463.0,314.6 458.0,312.8" fill="#60c0c8"/>
<polygon points="463.0,309.5 466.0,310.6 466.0,315.8 463.0,314.6" fill="#18a0a0"/>
<polygon points="466.0,310.6 476.0,314.3 476.0,319.5 466.0,315.8" fill="#18a0a0"/>
<line x1="467.5" y1="311.5" x2="474.5" y2="318.7" stroke="#001018" stroke-width="1"/>
<polygon points="476.0,314.3 486.0,317.9 486.0,323.2 476.0,319.5" fill="#10989c"/>
<line x1="477.5" y1="315.2" x2="484.5" y2="322.4" stroke="#001018" stroke-width="1"/>
<polygon points="486.0,317.9 490.0,319.4 490.0,324.7 486.0,323.2" fill="#10989c"/>
<polygon points="490.0,319.4 499.0,322.7 499.0,328.1 490.0,324.7" fill="#68c0c0"/>
<polygon points="490.0,319.4 497.5,322.2 499.0,327.2 490.0,324.7" fill="#20a030"/>
<line x1="491.5" y1="320.4" x2="497.5" y2="327.2" stroke="#001018" stroke-width="1"/>
<polygon points="499.0,322.7 503.0,324.2 503.0,329.6 499.0,328.1" fill="#60c0c8"/>
<polygon points="503.0,324.2 512.0,327.5 512.0,332.9 503.0,329.6" fill="#68c0c0"/>
<polygon points="503.0,324.2 510.5,326.9 512.0,332.0 503.0,329.6" fill="#208830"/>
<line x1="504.5" y1="325.2" x2="510.5" y2="332.0" stroke="#001018" stroke-width="1"/>
<polygon points="512.0,327.5 514.0,328.2 514.0,333.7 512.0,332.9" fill="#28a8b0"/>
<polygon points="514.0,328.2 525.0,332.3 525.0,337.8 514.0,333.7" fill="#18a0a0"/>
<line x1="515.5" y1="329.2" x2="523.5" y2="336.8" stroke="#001018" stroke-width="1"/>
<polygon points="525.0,332.3 535.0,335.9 535.0,341.5 525.0,337.8" fill="#28a8b0"/>
<line x1="526.5" y1="333.3" x2="533.5" y2="340.5" stroke="#001018" stroke-width="1"/>
<polygon points="535.0,335.9 545.0,339.6 545.0,345.2 535.0,341.5" fill="#18a0a0"/>
<line x1="536.5" y1="337.0" x2="543.5" y2="344.2" stroke="#001018" stroke-width="1"/>
<polygon points="545.0,339.6 549.0,341.1 549.0,346.7 545.0,345.2" fill="#50b8b8"/>
<polygon points="458.0,314.0 463.0,315.8 463.0,321.0 458.0,319.1" fill="#50b8b8"/>
<polygon points="463.0,315.8 466.0,317.0 466.0,322.1 463.0,321.0" fill="#18a0a0"/>
<polygon points="466.0,317.0 476.0,320.7 476.0,325.9 466.0,322.1" fill="#28a8b0"/>
<line x1="467.5" y1="317.9" x2="474.5" y2="325.1" stroke="#001018" stroke-width="1"/>
<polygon points="476.0,320.7 486.0,324.4 486.0,329.7 476.0,325.9" fill="#20a8a8"/>
<line x1="477.5" y1="321.6" x2="484.5" y2="328.9" stroke="#001018" stroke-width="1"/>
<polygon points="486.0,324.4 490.0,325.9 490.0,331.2 486.0,329.7" fill="#28a8b0"/>
<polygon points="490.0,325.9 499.0,329.3 499.0,334.7 490.0,331.2" fill="#68c0c0"/>
<polygon points="490.0,325.9 497.5,328.7 499.0,333.8 490.0,331.2" fill="#20a030"/>
<line x1="491.5" y1="326.9" x2="497.5" y2="333.8" stroke="#001018" stroke-width="1"/>
<polygon points="499.0,329.3 503.0,330.8 503.0,336.2 499.0,334.7" fill="#58c0c0"/>
<polygon points="503.0,330.8 512.0,334.1 512.0,339.6 503.0,336.2" fill="#68c0c0"/>
<polygon points="503.0,330.8 510.5,333.6 512.0,338.7 503.0,336.2" fill="#20a030"/>
<line x1="504.5" y1="331.8" x2="510.5" y2="338.7" stroke="#001018" stroke-width="1"/>
<polygon points="512.0,334.1 514.0,334.9 514.0,340.3 512.0,339.6" fill="#18a0a0"/>
<polygon points="514.0,334.9 525.0,339.0 525.0,344.5 514.0,340.3" fill="#28a8b0"/>
<line x1="515.5" y1="335.9" x2="523.5" y2="343.5" stroke="#001018" stroke-width="1"/>
<polygon points="525.0,339.0 535.0,342.7 535.0,348.3 525.0,344.5" fill="#28a8b0"/>
<line x1="526.5" y1="340.0" x2="533.5" y2="347.3" stroke="#001018" stroke-width="1"/>
<polygon points="535.0,342.7 545.0,346.4 545.0,352.1 535.0,348.3" fill="#28a8b0"/>
<line x1="536.5" y1="343.8" x2="543.5" y2="351.1" stroke="#001018" stroke-width="1"/>
<polygon points="545.0,346.4 549.0,347.9 549.0,353.6 545.0,352.1" fill="#60c0c8"/>
<line x1="463.5" y1="182" x2="463.5" y2="322" stroke="#000" stroke-width="1"/>
<line x1="474" y1="185" x2="474" y2="326" stroke="#000" stroke-width="1"/>
<line x1="484.5" y1="187" x2="484.5" y2="330" stroke="#000" stroke-width="1"/>
<line x1="512" y1="194" x2="512" y2="340" stroke="#000" stroke-width="1"/>
<line x1="523" y1="197" x2="523" y2="345" stroke="#000" stroke-width="1"/>
<line x1="533.5" y1="199" x2="533.5" y2="349" stroke="#000" stroke-width="1"/>
<line x1="465.5" y1="184" x2="465.5" y2="323" stroke="#a820b8" stroke-width="2"/>
<line x1="476" y1="186" x2="476" y2="327" stroke="#a820b8" stroke-width="2"/>
<line x1="486.5" y1="189" x2="486.5" y2="331" stroke="#a820b8" stroke-width="2"/>
<line x1="514" y1="196" x2="514" y2="341" stroke="#a820b8" stroke-width="2"/>
<line x1="525" y1="198" x2="525" y2="345" stroke="#a820b8" stroke-width="2"/>
<line x1="535.5" y1="201" x2="535.5" y2="349" stroke="#a820b8" stroke-width="2"/>
<polygon points="548,203 564,194 561,343 545,353" fill="#58c0b8"/>
<polygon points="553,200 557,198 554,348 550,350" fill="#a8d098" opacity="0.8"/>
<line x1="549" y1="204.0" x2="561" y2="190.0" stroke="#103838" stroke-width="0.9" stroke-dasharray="2 1.5"/>
<line x1="549" y1="210.8" x2="561" y2="196.8" stroke="#103838" stroke-width="0.9" stroke-dasharray="2 1.5"/>
<line x1="549" y1="217.6" x2="561" y2="203.5" stroke="#103838" stroke-width="0.9" stroke-dasharray="2 1.5"/>
<line x1="549" y1="224.5" x2="561" y2="210.3" stroke="#103838" stroke-width="0.9" stroke-dasharray="2 1.5"/>
<line x1="549" y1="231.3" x2="561" y2="217.1" stroke="#103838" stroke-width="0.9" stroke-dasharray="2 1.5"/>
<line x1="549" y1="238.1" x2="561" y2="223.9" stroke="#103838" stroke-width="0.9" stroke-dasharray="2 1.5"/>
<line x1="549" y1="244.9" x2="561" y2="230.6" stroke="#103838" stroke-width="0.9" stroke-dasharray="2 1.5"/>
<line x1="549" y1="251.7" x2="561" y2="237.4" stroke="#103838" stroke-width="0.9" stroke-dasharray="2 1.5"/>
<line x1="549" y1="258.5" x2="561" y2="244.2" stroke="#103838" stroke-width="0.9" stroke-dasharray="2 1.5"/>
<line x1="549" y1="265.4" x2="561" y2="251.0" stroke="#103838" stroke-width="0.9" stroke-dasharray="2 1.5"/>
<line x1="549" y1="272.2" x2="561" y2="257.7" stroke="#103838" stroke-width="0.9" stroke-dasharray="2 1.5"/>
<line x1="549" y1="279.0" x2="561" y2="264.5" stroke="#103838" stroke-width="0.9" stroke-dasharray="2 1.5"/>
<line x1="549" y1="285.8" x2="561" y2="271.3" stroke="#103838" stroke-width="0.9" stroke-dasharray="2 1.5"/>
<line x1="549" y1="292.6" x2="561" y2="278.0" stroke="#103838" stroke-width="0.9" stroke-dasharray="2 1.5"/>
<line x1="549" y1="299.5" x2="561" y2="284.8" stroke="#103838" stroke-width="0.9" stroke-dasharray="2 1.5"/>
<line x1="549" y1="306.3" x2="561" y2="291.6" stroke="#103838" stroke-width="0.9" stroke-dasharray="2 1.5"/>
<line x1="549" y1="313.1" x2="561" y2="298.4" stroke="#103838" stroke-width="0.9" stroke-dasharray="2 1.5"/>
<line x1="549" y1="319.9" x2="561" y2="305.1" stroke="#103838" stroke-width="0.9" stroke-dasharray="2 1.5"/>
<line x1="549" y1="326.7" x2="561" y2="311.9" stroke="#103838" stroke-width="0.9" stroke-dasharray="2 1.5"/>
<line x1="549" y1="333.5" x2="561" y2="318.7" stroke="#103838" stroke-width="0.9" stroke-dasharray="2 1.5"/>
<line x1="549" y1="340.4" x2="561" y2="325.5" stroke="#103838" stroke-width="0.9" stroke-dasharray="2 1.5"/>
<line x1="549" y1="347.2" x2="561" y2="332.2" stroke="#103838" stroke-width="0.9" stroke-dasharray="2 1.5"/>
<line x1="549" y1="354.0" x2="561" y2="339.0" stroke="#103838" stroke-width="0.9" stroke-dasharray="2 1.5"/>
<polygon points="458,181 476,171 564,194 548,203" fill="#189c9c"/>
<line x1="460.6" y1="179.6" x2="550.3" y2="201.7" stroke="#001818" stroke-width="1" stroke-dasharray="4 2"/>
<line x1="463.1" y1="178.1" x2="552.6" y2="200.4" stroke="#001818" stroke-width="1" stroke-dasharray="4 2"/>
<line x1="465.7" y1="176.7" x2="554.9" y2="199.1" stroke="#001818" stroke-width="1" stroke-dasharray="4 2"/>
<line x1="468.3" y1="175.3" x2="557.1" y2="197.9" stroke="#001818" stroke-width="1" stroke-dasharray="4 2"/>
<line x1="470.9" y1="173.9" x2="559.4" y2="196.6" stroke="#001818" stroke-width="1" stroke-dasharray="4 2"/>
<line x1="473.4" y1="172.4" x2="561.7" y2="195.3" stroke="#001818" stroke-width="1" stroke-dasharray="4 2"/>
<line x1="465.5" y1="182.8" x2="483.3" y2="172.9" stroke="#001818" stroke-width="0.9"/>
<line x1="473.0" y1="184.7" x2="490.7" y2="174.8" stroke="#001818" stroke-width="0.9"/>
<line x1="480.5" y1="186.5" x2="498.0" y2="176.8" stroke="#001818" stroke-width="0.9"/>
<line x1="488.0" y1="188.3" x2="505.3" y2="178.7" stroke="#001818" stroke-width="0.9"/>
<line x1="495.5" y1="190.2" x2="512.7" y2="180.6" stroke="#001818" stroke-width="0.9"/>
<line x1="503.0" y1="192.0" x2="520.0" y2="182.5" stroke="#001818" stroke-width="0.9"/>
<line x1="510.5" y1="193.8" x2="527.3" y2="184.4" stroke="#001818" stroke-width="0.9"/>
<line x1="518.0" y1="195.7" x2="534.7" y2="186.3" stroke="#001818" stroke-width="0.9"/>
<line x1="525.5" y1="197.5" x2="542.0" y2="188.2" stroke="#001818" stroke-width="0.9"/>
<line x1="533.0" y1="199.3" x2="549.3" y2="190.2" stroke="#001818" stroke-width="0.9"/>
<line x1="540.5" y1="201.2" x2="556.7" y2="192.1" stroke="#001818" stroke-width="0.9"/>
<polygon points="503,183 512,185 517,182 508,180" fill="#b0b070"/>
<polygon points="520,188 530,190 535,187 525,185" fill="#b0b070"/>
<polygon points="452,322 460,319.5 545,353 565,341.5 566,345 546,360 452,328" fill="#c00c18"/>

</svg>
</body></html>
